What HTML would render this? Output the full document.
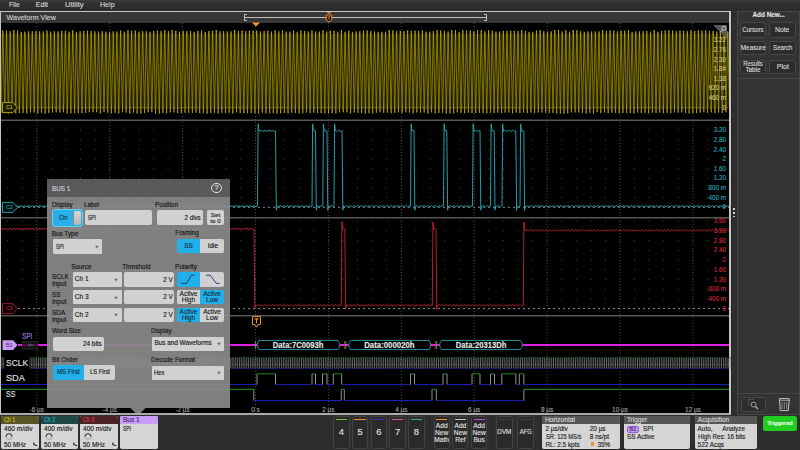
<!DOCTYPE html><html><head><meta charset="utf-8"><style>*{box-sizing:border-box;margin:0;padding:0}
html,body{width:800px;height:450px;overflow:hidden;background:#2e2e2e;font-family:"Liberation Sans",sans-serif;position:relative}
.a{position:absolute}
.t{position:absolute;white-space:nowrap;line-height:1;font-family:"Liberation Sans",sans-serif;-webkit-text-stroke:0.12px currentColor}
</style></head><body>
<div class="a" style="left:0px;top:0px;width:800px;height:11px;background:linear-gradient(#3c3c3c 0px,#303030 3px,#2c2c2c 10px);"></div>
<span class="t" style="left:8.50px;top:2.00px;font-size:7.1px;color:#d8d8d8;transform:scaleX(0.935);transform-origin:left top;">File</span>
<span class="t" style="left:35.80px;top:2.00px;font-size:7.1px;color:#d8d8d8;">Edit</span>
<span class="t" style="left:64.70px;top:2.00px;font-size:7.1px;color:#d8d8d8;transform:scaleX(1.072);transform-origin:left top;">Utility</span>
<span class="t" style="left:100.00px;top:2.00px;font-size:7.1px;color:#d8d8d8;">Help</span>
<div class="a" style="left:0px;top:11px;width:731px;height:404px;background:#000;border:1px solid #c4c4c4;border-right-width:2px;border-bottom:2px solid #ababab;"></div>
<div class="a" style="left:1px;top:12px;width:728px;height:11px;background:#373737;"></div>
<span class="t" style="left:6.50px;top:15.00px;font-size:7.1px;color:#cfcfcf;">Waveform View</span>
<div class="a" style="left:244px;top:13.6px;width:2.8px;height:7.2px;background:transparent;border:1px solid #bdbdbd;border-right:none;"></div>
<div class="a" style="left:244px;top:17.1px;width:243px;height:1px;background:#bdbdbd;"></div>
<div class="a" style="left:484.2px;top:13.6px;width:2.8px;height:7.2px;background:transparent;border:1px solid #bdbdbd;border-left:none;"></div>
<svg class="a" style="left:0;top:0" width="800" height="450" viewBox="0 0 800 450"><line x1="1" y1="120.3" x2="729" y2="120.3" stroke="#555" stroke-width="1.4"/><line x1="1" y1="217.8" x2="729" y2="217.8" stroke="#555" stroke-width="1.4"/><line x1="1" y1="315.7" x2="729" y2="315.7" stroke="#555" stroke-width="1.4"/><line x1="36.80" y1="23" x2="36.80" y2="413" stroke="#464646" stroke-width="1" stroke-dasharray="1 2"/><line x1="109.70" y1="23" x2="109.70" y2="413" stroke="#464646" stroke-width="1" stroke-dasharray="1 2"/><line x1="182.60" y1="23" x2="182.60" y2="413" stroke="#464646" stroke-width="1" stroke-dasharray="1 2"/><line x1="255.50" y1="23" x2="255.50" y2="413" stroke="#464646" stroke-width="1" stroke-dasharray="1 2"/><line x1="328.40" y1="23" x2="328.40" y2="413" stroke="#464646" stroke-width="1" stroke-dasharray="1 2"/><line x1="401.30" y1="23" x2="401.30" y2="413" stroke="#464646" stroke-width="1" stroke-dasharray="1 2"/><line x1="474.20" y1="23" x2="474.20" y2="413" stroke="#464646" stroke-width="1" stroke-dasharray="1 2"/><line x1="547.10" y1="23" x2="547.10" y2="413" stroke="#464646" stroke-width="1" stroke-dasharray="1 2"/><line x1="620.00" y1="23" x2="620.00" y2="413" stroke="#464646" stroke-width="1" stroke-dasharray="1 2"/><line x1="692.90" y1="23" x2="692.90" y2="413" stroke="#464646" stroke-width="1" stroke-dasharray="1 2"/><rect x="7.14" y="97.4" width="1" height="1" fill="#464646"/><rect x="21.72" y="97.4" width="1" height="1" fill="#464646"/><rect x="36.30" y="97.4" width="1" height="1" fill="#464646"/><rect x="50.88" y="97.4" width="1" height="1" fill="#464646"/><rect x="65.46" y="97.4" width="1" height="1" fill="#464646"/><rect x="80.04" y="97.4" width="1" height="1" fill="#464646"/><rect x="94.62" y="97.4" width="1" height="1" fill="#464646"/><rect x="109.20" y="97.4" width="1" height="1" fill="#464646"/><rect x="123.78" y="97.4" width="1" height="1" fill="#464646"/><rect x="138.36" y="97.4" width="1" height="1" fill="#464646"/><rect x="152.94" y="97.4" width="1" height="1" fill="#464646"/><rect x="167.52" y="97.4" width="1" height="1" fill="#464646"/><rect x="182.10" y="97.4" width="1" height="1" fill="#464646"/><rect x="196.68" y="97.4" width="1" height="1" fill="#464646"/><rect x="211.26" y="97.4" width="1" height="1" fill="#464646"/><rect x="225.84" y="97.4" width="1" height="1" fill="#464646"/><rect x="240.42" y="97.4" width="1" height="1" fill="#464646"/><rect x="255.00" y="97.4" width="1" height="1" fill="#464646"/><rect x="269.58" y="97.4" width="1" height="1" fill="#464646"/><rect x="284.16" y="97.4" width="1" height="1" fill="#464646"/><rect x="298.74" y="97.4" width="1" height="1" fill="#464646"/><rect x="313.32" y="97.4" width="1" height="1" fill="#464646"/><rect x="327.90" y="97.4" width="1" height="1" fill="#464646"/><rect x="342.48" y="97.4" width="1" height="1" fill="#464646"/><rect x="357.06" y="97.4" width="1" height="1" fill="#464646"/><rect x="371.64" y="97.4" width="1" height="1" fill="#464646"/><rect x="386.22" y="97.4" width="1" height="1" fill="#464646"/><rect x="400.80" y="97.4" width="1" height="1" fill="#464646"/><rect x="415.38" y="97.4" width="1" height="1" fill="#464646"/><rect x="429.96" y="97.4" width="1" height="1" fill="#464646"/><rect x="444.54" y="97.4" width="1" height="1" fill="#464646"/><rect x="459.12" y="97.4" width="1" height="1" fill="#464646"/><rect x="473.70" y="97.4" width="1" height="1" fill="#464646"/><rect x="488.28" y="97.4" width="1" height="1" fill="#464646"/><rect x="502.86" y="97.4" width="1" height="1" fill="#464646"/><rect x="517.44" y="97.4" width="1" height="1" fill="#464646"/><rect x="532.02" y="97.4" width="1" height="1" fill="#464646"/><rect x="546.60" y="97.4" width="1" height="1" fill="#464646"/><rect x="561.18" y="97.4" width="1" height="1" fill="#464646"/><rect x="575.76" y="97.4" width="1" height="1" fill="#464646"/><rect x="590.34" y="97.4" width="1" height="1" fill="#464646"/><rect x="604.92" y="97.4" width="1" height="1" fill="#464646"/><rect x="619.50" y="97.4" width="1" height="1" fill="#464646"/><rect x="634.08" y="97.4" width="1" height="1" fill="#464646"/><rect x="648.66" y="97.4" width="1" height="1" fill="#464646"/><rect x="663.24" y="97.4" width="1" height="1" fill="#464646"/><rect x="677.82" y="97.4" width="1" height="1" fill="#464646"/><rect x="692.40" y="97.4" width="1" height="1" fill="#464646"/><rect x="706.98" y="97.4" width="1" height="1" fill="#464646"/><rect x="721.56" y="97.4" width="1" height="1" fill="#464646"/><rect x="7.14" y="87.8" width="1" height="1" fill="#464646"/><rect x="21.72" y="87.8" width="1" height="1" fill="#464646"/><rect x="36.30" y="87.8" width="1" height="1" fill="#464646"/><rect x="50.88" y="87.8" width="1" height="1" fill="#464646"/><rect x="65.46" y="87.8" width="1" height="1" fill="#464646"/><rect x="80.04" y="87.8" width="1" height="1" fill="#464646"/><rect x="94.62" y="87.8" width="1" height="1" fill="#464646"/><rect x="109.20" y="87.8" width="1" height="1" fill="#464646"/><rect x="123.78" y="87.8" width="1" height="1" fill="#464646"/><rect x="138.36" y="87.8" width="1" height="1" fill="#464646"/><rect x="152.94" y="87.8" width="1" height="1" fill="#464646"/><rect x="167.52" y="87.8" width="1" height="1" fill="#464646"/><rect x="182.10" y="87.8" width="1" height="1" fill="#464646"/><rect x="196.68" y="87.8" width="1" height="1" fill="#464646"/><rect x="211.26" y="87.8" width="1" height="1" fill="#464646"/><rect x="225.84" y="87.8" width="1" height="1" fill="#464646"/><rect x="240.42" y="87.8" width="1" height="1" fill="#464646"/><rect x="255.00" y="87.8" width="1" height="1" fill="#464646"/><rect x="269.58" y="87.8" width="1" height="1" fill="#464646"/><rect x="284.16" y="87.8" width="1" height="1" fill="#464646"/><rect x="298.74" y="87.8" width="1" height="1" fill="#464646"/><rect x="313.32" y="87.8" width="1" height="1" fill="#464646"/><rect x="327.90" y="87.8" width="1" height="1" fill="#464646"/><rect x="342.48" y="87.8" width="1" height="1" fill="#464646"/><rect x="357.06" y="87.8" width="1" height="1" fill="#464646"/><rect x="371.64" y="87.8" width="1" height="1" fill="#464646"/><rect x="386.22" y="87.8" width="1" height="1" fill="#464646"/><rect x="400.80" y="87.8" width="1" height="1" fill="#464646"/><rect x="415.38" y="87.8" width="1" height="1" fill="#464646"/><rect x="429.96" y="87.8" width="1" height="1" fill="#464646"/><rect x="444.54" y="87.8" width="1" height="1" fill="#464646"/><rect x="459.12" y="87.8" width="1" height="1" fill="#464646"/><rect x="473.70" y="87.8" width="1" height="1" fill="#464646"/><rect x="488.28" y="87.8" width="1" height="1" fill="#464646"/><rect x="502.86" y="87.8" width="1" height="1" fill="#464646"/><rect x="517.44" y="87.8" width="1" height="1" fill="#464646"/><rect x="532.02" y="87.8" width="1" height="1" fill="#464646"/><rect x="546.60" y="87.8" width="1" height="1" fill="#464646"/><rect x="561.18" y="87.8" width="1" height="1" fill="#464646"/><rect x="575.76" y="87.8" width="1" height="1" fill="#464646"/><rect x="590.34" y="87.8" width="1" height="1" fill="#464646"/><rect x="604.92" y="87.8" width="1" height="1" fill="#464646"/><rect x="619.50" y="87.8" width="1" height="1" fill="#464646"/><rect x="634.08" y="87.8" width="1" height="1" fill="#464646"/><rect x="648.66" y="87.8" width="1" height="1" fill="#464646"/><rect x="663.24" y="87.8" width="1" height="1" fill="#464646"/><rect x="677.82" y="87.8" width="1" height="1" fill="#464646"/><rect x="692.40" y="87.8" width="1" height="1" fill="#464646"/><rect x="706.98" y="87.8" width="1" height="1" fill="#464646"/><rect x="721.56" y="87.8" width="1" height="1" fill="#464646"/><rect x="7.14" y="78.2" width="1" height="1" fill="#464646"/><rect x="21.72" y="78.2" width="1" height="1" fill="#464646"/><rect x="36.30" y="78.2" width="1" height="1" fill="#464646"/><rect x="50.88" y="78.2" width="1" height="1" fill="#464646"/><rect x="65.46" y="78.2" width="1" height="1" fill="#464646"/><rect x="80.04" y="78.2" width="1" height="1" fill="#464646"/><rect x="94.62" y="78.2" width="1" height="1" fill="#464646"/><rect x="109.20" y="78.2" width="1" height="1" fill="#464646"/><rect x="123.78" y="78.2" width="1" height="1" fill="#464646"/><rect x="138.36" y="78.2" width="1" height="1" fill="#464646"/><rect x="152.94" y="78.2" width="1" height="1" fill="#464646"/><rect x="167.52" y="78.2" width="1" height="1" fill="#464646"/><rect x="182.10" y="78.2" width="1" height="1" fill="#464646"/><rect x="196.68" y="78.2" width="1" height="1" fill="#464646"/><rect x="211.26" y="78.2" width="1" height="1" fill="#464646"/><rect x="225.84" y="78.2" width="1" height="1" fill="#464646"/><rect x="240.42" y="78.2" width="1" height="1" fill="#464646"/><rect x="255.00" y="78.2" width="1" height="1" fill="#464646"/><rect x="269.58" y="78.2" width="1" height="1" fill="#464646"/><rect x="284.16" y="78.2" width="1" height="1" fill="#464646"/><rect x="298.74" y="78.2" width="1" height="1" fill="#464646"/><rect x="313.32" y="78.2" width="1" height="1" fill="#464646"/><rect x="327.90" y="78.2" width="1" height="1" fill="#464646"/><rect x="342.48" y="78.2" width="1" height="1" fill="#464646"/><rect x="357.06" y="78.2" width="1" height="1" fill="#464646"/><rect x="371.64" y="78.2" width="1" height="1" fill="#464646"/><rect x="386.22" y="78.2" width="1" height="1" fill="#464646"/><rect x="400.80" y="78.2" width="1" height="1" fill="#464646"/><rect x="415.38" y="78.2" width="1" height="1" fill="#464646"/><rect x="429.96" y="78.2" width="1" height="1" fill="#464646"/><rect x="444.54" y="78.2" width="1" height="1" fill="#464646"/><rect x="459.12" y="78.2" width="1" height="1" fill="#464646"/><rect x="473.70" y="78.2" width="1" height="1" fill="#464646"/><rect x="488.28" y="78.2" width="1" height="1" fill="#464646"/><rect x="502.86" y="78.2" width="1" height="1" fill="#464646"/><rect x="517.44" y="78.2" width="1" height="1" fill="#464646"/><rect x="532.02" y="78.2" width="1" height="1" fill="#464646"/><rect x="546.60" y="78.2" width="1" height="1" fill="#464646"/><rect x="561.18" y="78.2" width="1" height="1" fill="#464646"/><rect x="575.76" y="78.2" width="1" height="1" fill="#464646"/><rect x="590.34" y="78.2" width="1" height="1" fill="#464646"/><rect x="604.92" y="78.2" width="1" height="1" fill="#464646"/><rect x="619.50" y="78.2" width="1" height="1" fill="#464646"/><rect x="634.08" y="78.2" width="1" height="1" fill="#464646"/><rect x="648.66" y="78.2" width="1" height="1" fill="#464646"/><rect x="663.24" y="78.2" width="1" height="1" fill="#464646"/><rect x="677.82" y="78.2" width="1" height="1" fill="#464646"/><rect x="692.40" y="78.2" width="1" height="1" fill="#464646"/><rect x="706.98" y="78.2" width="1" height="1" fill="#464646"/><rect x="721.56" y="78.2" width="1" height="1" fill="#464646"/><rect x="7.14" y="68.6" width="1" height="1" fill="#464646"/><rect x="21.72" y="68.6" width="1" height="1" fill="#464646"/><rect x="36.30" y="68.6" width="1" height="1" fill="#464646"/><rect x="50.88" y="68.6" width="1" height="1" fill="#464646"/><rect x="65.46" y="68.6" width="1" height="1" fill="#464646"/><rect x="80.04" y="68.6" width="1" height="1" fill="#464646"/><rect x="94.62" y="68.6" width="1" height="1" fill="#464646"/><rect x="109.20" y="68.6" width="1" height="1" fill="#464646"/><rect x="123.78" y="68.6" width="1" height="1" fill="#464646"/><rect x="138.36" y="68.6" width="1" height="1" fill="#464646"/><rect x="152.94" y="68.6" width="1" height="1" fill="#464646"/><rect x="167.52" y="68.6" width="1" height="1" fill="#464646"/><rect x="182.10" y="68.6" width="1" height="1" fill="#464646"/><rect x="196.68" y="68.6" width="1" height="1" fill="#464646"/><rect x="211.26" y="68.6" width="1" height="1" fill="#464646"/><rect x="225.84" y="68.6" width="1" height="1" fill="#464646"/><rect x="240.42" y="68.6" width="1" height="1" fill="#464646"/><rect x="255.00" y="68.6" width="1" height="1" fill="#464646"/><rect x="269.58" y="68.6" width="1" height="1" fill="#464646"/><rect x="284.16" y="68.6" width="1" height="1" fill="#464646"/><rect x="298.74" y="68.6" width="1" height="1" fill="#464646"/><rect x="313.32" y="68.6" width="1" height="1" fill="#464646"/><rect x="327.90" y="68.6" width="1" height="1" fill="#464646"/><rect x="342.48" y="68.6" width="1" height="1" fill="#464646"/><rect x="357.06" y="68.6" width="1" height="1" fill="#464646"/><rect x="371.64" y="68.6" width="1" height="1" fill="#464646"/><rect x="386.22" y="68.6" width="1" height="1" fill="#464646"/><rect x="400.80" y="68.6" width="1" height="1" fill="#464646"/><rect x="415.38" y="68.6" width="1" height="1" fill="#464646"/><rect x="429.96" y="68.6" width="1" height="1" fill="#464646"/><rect x="444.54" y="68.6" width="1" height="1" fill="#464646"/><rect x="459.12" y="68.6" width="1" height="1" fill="#464646"/><rect x="473.70" y="68.6" width="1" height="1" fill="#464646"/><rect x="488.28" y="68.6" width="1" height="1" fill="#464646"/><rect x="502.86" y="68.6" width="1" height="1" fill="#464646"/><rect x="517.44" y="68.6" width="1" height="1" fill="#464646"/><rect x="532.02" y="68.6" width="1" height="1" fill="#464646"/><rect x="546.60" y="68.6" width="1" height="1" fill="#464646"/><rect x="561.18" y="68.6" width="1" height="1" fill="#464646"/><rect x="575.76" y="68.6" width="1" height="1" fill="#464646"/><rect x="590.34" y="68.6" width="1" height="1" fill="#464646"/><rect x="604.92" y="68.6" width="1" height="1" fill="#464646"/><rect x="619.50" y="68.6" width="1" height="1" fill="#464646"/><rect x="634.08" y="68.6" width="1" height="1" fill="#464646"/><rect x="648.66" y="68.6" width="1" height="1" fill="#464646"/><rect x="663.24" y="68.6" width="1" height="1" fill="#464646"/><rect x="677.82" y="68.6" width="1" height="1" fill="#464646"/><rect x="692.40" y="68.6" width="1" height="1" fill="#464646"/><rect x="706.98" y="68.6" width="1" height="1" fill="#464646"/><rect x="721.56" y="68.6" width="1" height="1" fill="#464646"/><rect x="7.14" y="59.0" width="1" height="1" fill="#464646"/><rect x="21.72" y="59.0" width="1" height="1" fill="#464646"/><rect x="36.30" y="59.0" width="1" height="1" fill="#464646"/><rect x="50.88" y="59.0" width="1" height="1" fill="#464646"/><rect x="65.46" y="59.0" width="1" height="1" fill="#464646"/><rect x="80.04" y="59.0" width="1" height="1" fill="#464646"/><rect x="94.62" y="59.0" width="1" height="1" fill="#464646"/><rect x="109.20" y="59.0" width="1" height="1" fill="#464646"/><rect x="123.78" y="59.0" width="1" height="1" fill="#464646"/><rect x="138.36" y="59.0" width="1" height="1" fill="#464646"/><rect x="152.94" y="59.0" width="1" height="1" fill="#464646"/><rect x="167.52" y="59.0" width="1" height="1" fill="#464646"/><rect x="182.10" y="59.0" width="1" height="1" fill="#464646"/><rect x="196.68" y="59.0" width="1" height="1" fill="#464646"/><rect x="211.26" y="59.0" width="1" height="1" fill="#464646"/><rect x="225.84" y="59.0" width="1" height="1" fill="#464646"/><rect x="240.42" y="59.0" width="1" height="1" fill="#464646"/><rect x="255.00" y="59.0" width="1" height="1" fill="#464646"/><rect x="269.58" y="59.0" width="1" height="1" fill="#464646"/><rect x="284.16" y="59.0" width="1" height="1" fill="#464646"/><rect x="298.74" y="59.0" width="1" height="1" fill="#464646"/><rect x="313.32" y="59.0" width="1" height="1" fill="#464646"/><rect x="327.90" y="59.0" width="1" height="1" fill="#464646"/><rect x="342.48" y="59.0" width="1" height="1" fill="#464646"/><rect x="357.06" y="59.0" width="1" height="1" fill="#464646"/><rect x="371.64" y="59.0" width="1" height="1" fill="#464646"/><rect x="386.22" y="59.0" width="1" height="1" fill="#464646"/><rect x="400.80" y="59.0" width="1" height="1" fill="#464646"/><rect x="415.38" y="59.0" width="1" height="1" fill="#464646"/><rect x="429.96" y="59.0" width="1" height="1" fill="#464646"/><rect x="444.54" y="59.0" width="1" height="1" fill="#464646"/><rect x="459.12" y="59.0" width="1" height="1" fill="#464646"/><rect x="473.70" y="59.0" width="1" height="1" fill="#464646"/><rect x="488.28" y="59.0" width="1" height="1" fill="#464646"/><rect x="502.86" y="59.0" width="1" height="1" fill="#464646"/><rect x="517.44" y="59.0" width="1" height="1" fill="#464646"/><rect x="532.02" y="59.0" width="1" height="1" fill="#464646"/><rect x="546.60" y="59.0" width="1" height="1" fill="#464646"/><rect x="561.18" y="59.0" width="1" height="1" fill="#464646"/><rect x="575.76" y="59.0" width="1" height="1" fill="#464646"/><rect x="590.34" y="59.0" width="1" height="1" fill="#464646"/><rect x="604.92" y="59.0" width="1" height="1" fill="#464646"/><rect x="619.50" y="59.0" width="1" height="1" fill="#464646"/><rect x="634.08" y="59.0" width="1" height="1" fill="#464646"/><rect x="648.66" y="59.0" width="1" height="1" fill="#464646"/><rect x="663.24" y="59.0" width="1" height="1" fill="#464646"/><rect x="677.82" y="59.0" width="1" height="1" fill="#464646"/><rect x="692.40" y="59.0" width="1" height="1" fill="#464646"/><rect x="706.98" y="59.0" width="1" height="1" fill="#464646"/><rect x="721.56" y="59.0" width="1" height="1" fill="#464646"/><rect x="7.14" y="49.4" width="1" height="1" fill="#464646"/><rect x="21.72" y="49.4" width="1" height="1" fill="#464646"/><rect x="36.30" y="49.4" width="1" height="1" fill="#464646"/><rect x="50.88" y="49.4" width="1" height="1" fill="#464646"/><rect x="65.46" y="49.4" width="1" height="1" fill="#464646"/><rect x="80.04" y="49.4" width="1" height="1" fill="#464646"/><rect x="94.62" y="49.4" width="1" height="1" fill="#464646"/><rect x="109.20" y="49.4" width="1" height="1" fill="#464646"/><rect x="123.78" y="49.4" width="1" height="1" fill="#464646"/><rect x="138.36" y="49.4" width="1" height="1" fill="#464646"/><rect x="152.94" y="49.4" width="1" height="1" fill="#464646"/><rect x="167.52" y="49.4" width="1" height="1" fill="#464646"/><rect x="182.10" y="49.4" width="1" height="1" fill="#464646"/><rect x="196.68" y="49.4" width="1" height="1" fill="#464646"/><rect x="211.26" y="49.4" width="1" height="1" fill="#464646"/><rect x="225.84" y="49.4" width="1" height="1" fill="#464646"/><rect x="240.42" y="49.4" width="1" height="1" fill="#464646"/><rect x="255.00" y="49.4" width="1" height="1" fill="#464646"/><rect x="269.58" y="49.4" width="1" height="1" fill="#464646"/><rect x="284.16" y="49.4" width="1" height="1" fill="#464646"/><rect x="298.74" y="49.4" width="1" height="1" fill="#464646"/><rect x="313.32" y="49.4" width="1" height="1" fill="#464646"/><rect x="327.90" y="49.4" width="1" height="1" fill="#464646"/><rect x="342.48" y="49.4" width="1" height="1" fill="#464646"/><rect x="357.06" y="49.4" width="1" height="1" fill="#464646"/><rect x="371.64" y="49.4" width="1" height="1" fill="#464646"/><rect x="386.22" y="49.4" width="1" height="1" fill="#464646"/><rect x="400.80" y="49.4" width="1" height="1" fill="#464646"/><rect x="415.38" y="49.4" width="1" height="1" fill="#464646"/><rect x="429.96" y="49.4" width="1" height="1" fill="#464646"/><rect x="444.54" y="49.4" width="1" height="1" fill="#464646"/><rect x="459.12" y="49.4" width="1" height="1" fill="#464646"/><rect x="473.70" y="49.4" width="1" height="1" fill="#464646"/><rect x="488.28" y="49.4" width="1" height="1" fill="#464646"/><rect x="502.86" y="49.4" width="1" height="1" fill="#464646"/><rect x="517.44" y="49.4" width="1" height="1" fill="#464646"/><rect x="532.02" y="49.4" width="1" height="1" fill="#464646"/><rect x="546.60" y="49.4" width="1" height="1" fill="#464646"/><rect x="561.18" y="49.4" width="1" height="1" fill="#464646"/><rect x="575.76" y="49.4" width="1" height="1" fill="#464646"/><rect x="590.34" y="49.4" width="1" height="1" fill="#464646"/><rect x="604.92" y="49.4" width="1" height="1" fill="#464646"/><rect x="619.50" y="49.4" width="1" height="1" fill="#464646"/><rect x="634.08" y="49.4" width="1" height="1" fill="#464646"/><rect x="648.66" y="49.4" width="1" height="1" fill="#464646"/><rect x="663.24" y="49.4" width="1" height="1" fill="#464646"/><rect x="677.82" y="49.4" width="1" height="1" fill="#464646"/><rect x="692.40" y="49.4" width="1" height="1" fill="#464646"/><rect x="706.98" y="49.4" width="1" height="1" fill="#464646"/><rect x="721.56" y="49.4" width="1" height="1" fill="#464646"/><rect x="7.14" y="39.8" width="1" height="1" fill="#464646"/><rect x="21.72" y="39.8" width="1" height="1" fill="#464646"/><rect x="36.30" y="39.8" width="1" height="1" fill="#464646"/><rect x="50.88" y="39.8" width="1" height="1" fill="#464646"/><rect x="65.46" y="39.8" width="1" height="1" fill="#464646"/><rect x="80.04" y="39.8" width="1" height="1" fill="#464646"/><rect x="94.62" y="39.8" width="1" height="1" fill="#464646"/><rect x="109.20" y="39.8" width="1" height="1" fill="#464646"/><rect x="123.78" y="39.8" width="1" height="1" fill="#464646"/><rect x="138.36" y="39.8" width="1" height="1" fill="#464646"/><rect x="152.94" y="39.8" width="1" height="1" fill="#464646"/><rect x="167.52" y="39.8" width="1" height="1" fill="#464646"/><rect x="182.10" y="39.8" width="1" height="1" fill="#464646"/><rect x="196.68" y="39.8" width="1" height="1" fill="#464646"/><rect x="211.26" y="39.8" width="1" height="1" fill="#464646"/><rect x="225.84" y="39.8" width="1" height="1" fill="#464646"/><rect x="240.42" y="39.8" width="1" height="1" fill="#464646"/><rect x="255.00" y="39.8" width="1" height="1" fill="#464646"/><rect x="269.58" y="39.8" width="1" height="1" fill="#464646"/><rect x="284.16" y="39.8" width="1" height="1" fill="#464646"/><rect x="298.74" y="39.8" width="1" height="1" fill="#464646"/><rect x="313.32" y="39.8" width="1" height="1" fill="#464646"/><rect x="327.90" y="39.8" width="1" height="1" fill="#464646"/><rect x="342.48" y="39.8" width="1" height="1" fill="#464646"/><rect x="357.06" y="39.8" width="1" height="1" fill="#464646"/><rect x="371.64" y="39.8" width="1" height="1" fill="#464646"/><rect x="386.22" y="39.8" width="1" height="1" fill="#464646"/><rect x="400.80" y="39.8" width="1" height="1" fill="#464646"/><rect x="415.38" y="39.8" width="1" height="1" fill="#464646"/><rect x="429.96" y="39.8" width="1" height="1" fill="#464646"/><rect x="444.54" y="39.8" width="1" height="1" fill="#464646"/><rect x="459.12" y="39.8" width="1" height="1" fill="#464646"/><rect x="473.70" y="39.8" width="1" height="1" fill="#464646"/><rect x="488.28" y="39.8" width="1" height="1" fill="#464646"/><rect x="502.86" y="39.8" width="1" height="1" fill="#464646"/><rect x="517.44" y="39.8" width="1" height="1" fill="#464646"/><rect x="532.02" y="39.8" width="1" height="1" fill="#464646"/><rect x="546.60" y="39.8" width="1" height="1" fill="#464646"/><rect x="561.18" y="39.8" width="1" height="1" fill="#464646"/><rect x="575.76" y="39.8" width="1" height="1" fill="#464646"/><rect x="590.34" y="39.8" width="1" height="1" fill="#464646"/><rect x="604.92" y="39.8" width="1" height="1" fill="#464646"/><rect x="619.50" y="39.8" width="1" height="1" fill="#464646"/><rect x="634.08" y="39.8" width="1" height="1" fill="#464646"/><rect x="648.66" y="39.8" width="1" height="1" fill="#464646"/><rect x="663.24" y="39.8" width="1" height="1" fill="#464646"/><rect x="677.82" y="39.8" width="1" height="1" fill="#464646"/><rect x="692.40" y="39.8" width="1" height="1" fill="#464646"/><rect x="706.98" y="39.8" width="1" height="1" fill="#464646"/><rect x="721.56" y="39.8" width="1" height="1" fill="#464646"/><rect x="7.14" y="197.2" width="1" height="1" fill="#464646"/><rect x="21.72" y="197.2" width="1" height="1" fill="#464646"/><rect x="36.30" y="197.2" width="1" height="1" fill="#464646"/><rect x="50.88" y="197.2" width="1" height="1" fill="#464646"/><rect x="65.46" y="197.2" width="1" height="1" fill="#464646"/><rect x="80.04" y="197.2" width="1" height="1" fill="#464646"/><rect x="94.62" y="197.2" width="1" height="1" fill="#464646"/><rect x="109.20" y="197.2" width="1" height="1" fill="#464646"/><rect x="123.78" y="197.2" width="1" height="1" fill="#464646"/><rect x="138.36" y="197.2" width="1" height="1" fill="#464646"/><rect x="152.94" y="197.2" width="1" height="1" fill="#464646"/><rect x="167.52" y="197.2" width="1" height="1" fill="#464646"/><rect x="182.10" y="197.2" width="1" height="1" fill="#464646"/><rect x="196.68" y="197.2" width="1" height="1" fill="#464646"/><rect x="211.26" y="197.2" width="1" height="1" fill="#464646"/><rect x="225.84" y="197.2" width="1" height="1" fill="#464646"/><rect x="240.42" y="197.2" width="1" height="1" fill="#464646"/><rect x="255.00" y="197.2" width="1" height="1" fill="#464646"/><rect x="269.58" y="197.2" width="1" height="1" fill="#464646"/><rect x="284.16" y="197.2" width="1" height="1" fill="#464646"/><rect x="298.74" y="197.2" width="1" height="1" fill="#464646"/><rect x="313.32" y="197.2" width="1" height="1" fill="#464646"/><rect x="327.90" y="197.2" width="1" height="1" fill="#464646"/><rect x="342.48" y="197.2" width="1" height="1" fill="#464646"/><rect x="357.06" y="197.2" width="1" height="1" fill="#464646"/><rect x="371.64" y="197.2" width="1" height="1" fill="#464646"/><rect x="386.22" y="197.2" width="1" height="1" fill="#464646"/><rect x="400.80" y="197.2" width="1" height="1" fill="#464646"/><rect x="415.38" y="197.2" width="1" height="1" fill="#464646"/><rect x="429.96" y="197.2" width="1" height="1" fill="#464646"/><rect x="444.54" y="197.2" width="1" height="1" fill="#464646"/><rect x="459.12" y="197.2" width="1" height="1" fill="#464646"/><rect x="473.70" y="197.2" width="1" height="1" fill="#464646"/><rect x="488.28" y="197.2" width="1" height="1" fill="#464646"/><rect x="502.86" y="197.2" width="1" height="1" fill="#464646"/><rect x="517.44" y="197.2" width="1" height="1" fill="#464646"/><rect x="532.02" y="197.2" width="1" height="1" fill="#464646"/><rect x="546.60" y="197.2" width="1" height="1" fill="#464646"/><rect x="561.18" y="197.2" width="1" height="1" fill="#464646"/><rect x="575.76" y="197.2" width="1" height="1" fill="#464646"/><rect x="590.34" y="197.2" width="1" height="1" fill="#464646"/><rect x="604.92" y="197.2" width="1" height="1" fill="#464646"/><rect x="619.50" y="197.2" width="1" height="1" fill="#464646"/><rect x="634.08" y="197.2" width="1" height="1" fill="#464646"/><rect x="648.66" y="197.2" width="1" height="1" fill="#464646"/><rect x="663.24" y="197.2" width="1" height="1" fill="#464646"/><rect x="677.82" y="197.2" width="1" height="1" fill="#464646"/><rect x="692.40" y="197.2" width="1" height="1" fill="#464646"/><rect x="706.98" y="197.2" width="1" height="1" fill="#464646"/><rect x="721.56" y="197.2" width="1" height="1" fill="#464646"/><rect x="7.14" y="187.5" width="1" height="1" fill="#464646"/><rect x="21.72" y="187.5" width="1" height="1" fill="#464646"/><rect x="36.30" y="187.5" width="1" height="1" fill="#464646"/><rect x="50.88" y="187.5" width="1" height="1" fill="#464646"/><rect x="65.46" y="187.5" width="1" height="1" fill="#464646"/><rect x="80.04" y="187.5" width="1" height="1" fill="#464646"/><rect x="94.62" y="187.5" width="1" height="1" fill="#464646"/><rect x="109.20" y="187.5" width="1" height="1" fill="#464646"/><rect x="123.78" y="187.5" width="1" height="1" fill="#464646"/><rect x="138.36" y="187.5" width="1" height="1" fill="#464646"/><rect x="152.94" y="187.5" width="1" height="1" fill="#464646"/><rect x="167.52" y="187.5" width="1" height="1" fill="#464646"/><rect x="182.10" y="187.5" width="1" height="1" fill="#464646"/><rect x="196.68" y="187.5" width="1" height="1" fill="#464646"/><rect x="211.26" y="187.5" width="1" height="1" fill="#464646"/><rect x="225.84" y="187.5" width="1" height="1" fill="#464646"/><rect x="240.42" y="187.5" width="1" height="1" fill="#464646"/><rect x="255.00" y="187.5" width="1" height="1" fill="#464646"/><rect x="269.58" y="187.5" width="1" height="1" fill="#464646"/><rect x="284.16" y="187.5" width="1" height="1" fill="#464646"/><rect x="298.74" y="187.5" width="1" height="1" fill="#464646"/><rect x="313.32" y="187.5" width="1" height="1" fill="#464646"/><rect x="327.90" y="187.5" width="1" height="1" fill="#464646"/><rect x="342.48" y="187.5" width="1" height="1" fill="#464646"/><rect x="357.06" y="187.5" width="1" height="1" fill="#464646"/><rect x="371.64" y="187.5" width="1" height="1" fill="#464646"/><rect x="386.22" y="187.5" width="1" height="1" fill="#464646"/><rect x="400.80" y="187.5" width="1" height="1" fill="#464646"/><rect x="415.38" y="187.5" width="1" height="1" fill="#464646"/><rect x="429.96" y="187.5" width="1" height="1" fill="#464646"/><rect x="444.54" y="187.5" width="1" height="1" fill="#464646"/><rect x="459.12" y="187.5" width="1" height="1" fill="#464646"/><rect x="473.70" y="187.5" width="1" height="1" fill="#464646"/><rect x="488.28" y="187.5" width="1" height="1" fill="#464646"/><rect x="502.86" y="187.5" width="1" height="1" fill="#464646"/><rect x="517.44" y="187.5" width="1" height="1" fill="#464646"/><rect x="532.02" y="187.5" width="1" height="1" fill="#464646"/><rect x="546.60" y="187.5" width="1" height="1" fill="#464646"/><rect x="561.18" y="187.5" width="1" height="1" fill="#464646"/><rect x="575.76" y="187.5" width="1" height="1" fill="#464646"/><rect x="590.34" y="187.5" width="1" height="1" fill="#464646"/><rect x="604.92" y="187.5" width="1" height="1" fill="#464646"/><rect x="619.50" y="187.5" width="1" height="1" fill="#464646"/><rect x="634.08" y="187.5" width="1" height="1" fill="#464646"/><rect x="648.66" y="187.5" width="1" height="1" fill="#464646"/><rect x="663.24" y="187.5" width="1" height="1" fill="#464646"/><rect x="677.82" y="187.5" width="1" height="1" fill="#464646"/><rect x="692.40" y="187.5" width="1" height="1" fill="#464646"/><rect x="706.98" y="187.5" width="1" height="1" fill="#464646"/><rect x="721.56" y="187.5" width="1" height="1" fill="#464646"/><rect x="7.14" y="177.9" width="1" height="1" fill="#464646"/><rect x="21.72" y="177.9" width="1" height="1" fill="#464646"/><rect x="36.30" y="177.9" width="1" height="1" fill="#464646"/><rect x="50.88" y="177.9" width="1" height="1" fill="#464646"/><rect x="65.46" y="177.9" width="1" height="1" fill="#464646"/><rect x="80.04" y="177.9" width="1" height="1" fill="#464646"/><rect x="94.62" y="177.9" width="1" height="1" fill="#464646"/><rect x="109.20" y="177.9" width="1" height="1" fill="#464646"/><rect x="123.78" y="177.9" width="1" height="1" fill="#464646"/><rect x="138.36" y="177.9" width="1" height="1" fill="#464646"/><rect x="152.94" y="177.9" width="1" height="1" fill="#464646"/><rect x="167.52" y="177.9" width="1" height="1" fill="#464646"/><rect x="182.10" y="177.9" width="1" height="1" fill="#464646"/><rect x="196.68" y="177.9" width="1" height="1" fill="#464646"/><rect x="211.26" y="177.9" width="1" height="1" fill="#464646"/><rect x="225.84" y="177.9" width="1" height="1" fill="#464646"/><rect x="240.42" y="177.9" width="1" height="1" fill="#464646"/><rect x="255.00" y="177.9" width="1" height="1" fill="#464646"/><rect x="269.58" y="177.9" width="1" height="1" fill="#464646"/><rect x="284.16" y="177.9" width="1" height="1" fill="#464646"/><rect x="298.74" y="177.9" width="1" height="1" fill="#464646"/><rect x="313.32" y="177.9" width="1" height="1" fill="#464646"/><rect x="327.90" y="177.9" width="1" height="1" fill="#464646"/><rect x="342.48" y="177.9" width="1" height="1" fill="#464646"/><rect x="357.06" y="177.9" width="1" height="1" fill="#464646"/><rect x="371.64" y="177.9" width="1" height="1" fill="#464646"/><rect x="386.22" y="177.9" width="1" height="1" fill="#464646"/><rect x="400.80" y="177.9" width="1" height="1" fill="#464646"/><rect x="415.38" y="177.9" width="1" height="1" fill="#464646"/><rect x="429.96" y="177.9" width="1" height="1" fill="#464646"/><rect x="444.54" y="177.9" width="1" height="1" fill="#464646"/><rect x="459.12" y="177.9" width="1" height="1" fill="#464646"/><rect x="473.70" y="177.9" width="1" height="1" fill="#464646"/><rect x="488.28" y="177.9" width="1" height="1" fill="#464646"/><rect x="502.86" y="177.9" width="1" height="1" fill="#464646"/><rect x="517.44" y="177.9" width="1" height="1" fill="#464646"/><rect x="532.02" y="177.9" width="1" height="1" fill="#464646"/><rect x="546.60" y="177.9" width="1" height="1" fill="#464646"/><rect x="561.18" y="177.9" width="1" height="1" fill="#464646"/><rect x="575.76" y="177.9" width="1" height="1" fill="#464646"/><rect x="590.34" y="177.9" width="1" height="1" fill="#464646"/><rect x="604.92" y="177.9" width="1" height="1" fill="#464646"/><rect x="619.50" y="177.9" width="1" height="1" fill="#464646"/><rect x="634.08" y="177.9" width="1" height="1" fill="#464646"/><rect x="648.66" y="177.9" width="1" height="1" fill="#464646"/><rect x="663.24" y="177.9" width="1" height="1" fill="#464646"/><rect x="677.82" y="177.9" width="1" height="1" fill="#464646"/><rect x="692.40" y="177.9" width="1" height="1" fill="#464646"/><rect x="706.98" y="177.9" width="1" height="1" fill="#464646"/><rect x="721.56" y="177.9" width="1" height="1" fill="#464646"/><rect x="7.14" y="168.2" width="1" height="1" fill="#464646"/><rect x="21.72" y="168.2" width="1" height="1" fill="#464646"/><rect x="36.30" y="168.2" width="1" height="1" fill="#464646"/><rect x="50.88" y="168.2" width="1" height="1" fill="#464646"/><rect x="65.46" y="168.2" width="1" height="1" fill="#464646"/><rect x="80.04" y="168.2" width="1" height="1" fill="#464646"/><rect x="94.62" y="168.2" width="1" height="1" fill="#464646"/><rect x="109.20" y="168.2" width="1" height="1" fill="#464646"/><rect x="123.78" y="168.2" width="1" height="1" fill="#464646"/><rect x="138.36" y="168.2" width="1" height="1" fill="#464646"/><rect x="152.94" y="168.2" width="1" height="1" fill="#464646"/><rect x="167.52" y="168.2" width="1" height="1" fill="#464646"/><rect x="182.10" y="168.2" width="1" height="1" fill="#464646"/><rect x="196.68" y="168.2" width="1" height="1" fill="#464646"/><rect x="211.26" y="168.2" width="1" height="1" fill="#464646"/><rect x="225.84" y="168.2" width="1" height="1" fill="#464646"/><rect x="240.42" y="168.2" width="1" height="1" fill="#464646"/><rect x="255.00" y="168.2" width="1" height="1" fill="#464646"/><rect x="269.58" y="168.2" width="1" height="1" fill="#464646"/><rect x="284.16" y="168.2" width="1" height="1" fill="#464646"/><rect x="298.74" y="168.2" width="1" height="1" fill="#464646"/><rect x="313.32" y="168.2" width="1" height="1" fill="#464646"/><rect x="327.90" y="168.2" width="1" height="1" fill="#464646"/><rect x="342.48" y="168.2" width="1" height="1" fill="#464646"/><rect x="357.06" y="168.2" width="1" height="1" fill="#464646"/><rect x="371.64" y="168.2" width="1" height="1" fill="#464646"/><rect x="386.22" y="168.2" width="1" height="1" fill="#464646"/><rect x="400.80" y="168.2" width="1" height="1" fill="#464646"/><rect x="415.38" y="168.2" width="1" height="1" fill="#464646"/><rect x="429.96" y="168.2" width="1" height="1" fill="#464646"/><rect x="444.54" y="168.2" width="1" height="1" fill="#464646"/><rect x="459.12" y="168.2" width="1" height="1" fill="#464646"/><rect x="473.70" y="168.2" width="1" height="1" fill="#464646"/><rect x="488.28" y="168.2" width="1" height="1" fill="#464646"/><rect x="502.86" y="168.2" width="1" height="1" fill="#464646"/><rect x="517.44" y="168.2" width="1" height="1" fill="#464646"/><rect x="532.02" y="168.2" width="1" height="1" fill="#464646"/><rect x="546.60" y="168.2" width="1" height="1" fill="#464646"/><rect x="561.18" y="168.2" width="1" height="1" fill="#464646"/><rect x="575.76" y="168.2" width="1" height="1" fill="#464646"/><rect x="590.34" y="168.2" width="1" height="1" fill="#464646"/><rect x="604.92" y="168.2" width="1" height="1" fill="#464646"/><rect x="619.50" y="168.2" width="1" height="1" fill="#464646"/><rect x="634.08" y="168.2" width="1" height="1" fill="#464646"/><rect x="648.66" y="168.2" width="1" height="1" fill="#464646"/><rect x="663.24" y="168.2" width="1" height="1" fill="#464646"/><rect x="677.82" y="168.2" width="1" height="1" fill="#464646"/><rect x="692.40" y="168.2" width="1" height="1" fill="#464646"/><rect x="706.98" y="168.2" width="1" height="1" fill="#464646"/><rect x="721.56" y="168.2" width="1" height="1" fill="#464646"/><rect x="7.14" y="158.6" width="1" height="1" fill="#464646"/><rect x="21.72" y="158.6" width="1" height="1" fill="#464646"/><rect x="36.30" y="158.6" width="1" height="1" fill="#464646"/><rect x="50.88" y="158.6" width="1" height="1" fill="#464646"/><rect x="65.46" y="158.6" width="1" height="1" fill="#464646"/><rect x="80.04" y="158.6" width="1" height="1" fill="#464646"/><rect x="94.62" y="158.6" width="1" height="1" fill="#464646"/><rect x="109.20" y="158.6" width="1" height="1" fill="#464646"/><rect x="123.78" y="158.6" width="1" height="1" fill="#464646"/><rect x="138.36" y="158.6" width="1" height="1" fill="#464646"/><rect x="152.94" y="158.6" width="1" height="1" fill="#464646"/><rect x="167.52" y="158.6" width="1" height="1" fill="#464646"/><rect x="182.10" y="158.6" width="1" height="1" fill="#464646"/><rect x="196.68" y="158.6" width="1" height="1" fill="#464646"/><rect x="211.26" y="158.6" width="1" height="1" fill="#464646"/><rect x="225.84" y="158.6" width="1" height="1" fill="#464646"/><rect x="240.42" y="158.6" width="1" height="1" fill="#464646"/><rect x="255.00" y="158.6" width="1" height="1" fill="#464646"/><rect x="269.58" y="158.6" width="1" height="1" fill="#464646"/><rect x="284.16" y="158.6" width="1" height="1" fill="#464646"/><rect x="298.74" y="158.6" width="1" height="1" fill="#464646"/><rect x="313.32" y="158.6" width="1" height="1" fill="#464646"/><rect x="327.90" y="158.6" width="1" height="1" fill="#464646"/><rect x="342.48" y="158.6" width="1" height="1" fill="#464646"/><rect x="357.06" y="158.6" width="1" height="1" fill="#464646"/><rect x="371.64" y="158.6" width="1" height="1" fill="#464646"/><rect x="386.22" y="158.6" width="1" height="1" fill="#464646"/><rect x="400.80" y="158.6" width="1" height="1" fill="#464646"/><rect x="415.38" y="158.6" width="1" height="1" fill="#464646"/><rect x="429.96" y="158.6" width="1" height="1" fill="#464646"/><rect x="444.54" y="158.6" width="1" height="1" fill="#464646"/><rect x="459.12" y="158.6" width="1" height="1" fill="#464646"/><rect x="473.70" y="158.6" width="1" height="1" fill="#464646"/><rect x="488.28" y="158.6" width="1" height="1" fill="#464646"/><rect x="502.86" y="158.6" width="1" height="1" fill="#464646"/><rect x="517.44" y="158.6" width="1" height="1" fill="#464646"/><rect x="532.02" y="158.6" width="1" height="1" fill="#464646"/><rect x="546.60" y="158.6" width="1" height="1" fill="#464646"/><rect x="561.18" y="158.6" width="1" height="1" fill="#464646"/><rect x="575.76" y="158.6" width="1" height="1" fill="#464646"/><rect x="590.34" y="158.6" width="1" height="1" fill="#464646"/><rect x="604.92" y="158.6" width="1" height="1" fill="#464646"/><rect x="619.50" y="158.6" width="1" height="1" fill="#464646"/><rect x="634.08" y="158.6" width="1" height="1" fill="#464646"/><rect x="648.66" y="158.6" width="1" height="1" fill="#464646"/><rect x="663.24" y="158.6" width="1" height="1" fill="#464646"/><rect x="677.82" y="158.6" width="1" height="1" fill="#464646"/><rect x="692.40" y="158.6" width="1" height="1" fill="#464646"/><rect x="706.98" y="158.6" width="1" height="1" fill="#464646"/><rect x="721.56" y="158.6" width="1" height="1" fill="#464646"/><rect x="7.14" y="148.9" width="1" height="1" fill="#464646"/><rect x="21.72" y="148.9" width="1" height="1" fill="#464646"/><rect x="36.30" y="148.9" width="1" height="1" fill="#464646"/><rect x="50.88" y="148.9" width="1" height="1" fill="#464646"/><rect x="65.46" y="148.9" width="1" height="1" fill="#464646"/><rect x="80.04" y="148.9" width="1" height="1" fill="#464646"/><rect x="94.62" y="148.9" width="1" height="1" fill="#464646"/><rect x="109.20" y="148.9" width="1" height="1" fill="#464646"/><rect x="123.78" y="148.9" width="1" height="1" fill="#464646"/><rect x="138.36" y="148.9" width="1" height="1" fill="#464646"/><rect x="152.94" y="148.9" width="1" height="1" fill="#464646"/><rect x="167.52" y="148.9" width="1" height="1" fill="#464646"/><rect x="182.10" y="148.9" width="1" height="1" fill="#464646"/><rect x="196.68" y="148.9" width="1" height="1" fill="#464646"/><rect x="211.26" y="148.9" width="1" height="1" fill="#464646"/><rect x="225.84" y="148.9" width="1" height="1" fill="#464646"/><rect x="240.42" y="148.9" width="1" height="1" fill="#464646"/><rect x="255.00" y="148.9" width="1" height="1" fill="#464646"/><rect x="269.58" y="148.9" width="1" height="1" fill="#464646"/><rect x="284.16" y="148.9" width="1" height="1" fill="#464646"/><rect x="298.74" y="148.9" width="1" height="1" fill="#464646"/><rect x="313.32" y="148.9" width="1" height="1" fill="#464646"/><rect x="327.90" y="148.9" width="1" height="1" fill="#464646"/><rect x="342.48" y="148.9" width="1" height="1" fill="#464646"/><rect x="357.06" y="148.9" width="1" height="1" fill="#464646"/><rect x="371.64" y="148.9" width="1" height="1" fill="#464646"/><rect x="386.22" y="148.9" width="1" height="1" fill="#464646"/><rect x="400.80" y="148.9" width="1" height="1" fill="#464646"/><rect x="415.38" y="148.9" width="1" height="1" fill="#464646"/><rect x="429.96" y="148.9" width="1" height="1" fill="#464646"/><rect x="444.54" y="148.9" width="1" height="1" fill="#464646"/><rect x="459.12" y="148.9" width="1" height="1" fill="#464646"/><rect x="473.70" y="148.9" width="1" height="1" fill="#464646"/><rect x="488.28" y="148.9" width="1" height="1" fill="#464646"/><rect x="502.86" y="148.9" width="1" height="1" fill="#464646"/><rect x="517.44" y="148.9" width="1" height="1" fill="#464646"/><rect x="532.02" y="148.9" width="1" height="1" fill="#464646"/><rect x="546.60" y="148.9" width="1" height="1" fill="#464646"/><rect x="561.18" y="148.9" width="1" height="1" fill="#464646"/><rect x="575.76" y="148.9" width="1" height="1" fill="#464646"/><rect x="590.34" y="148.9" width="1" height="1" fill="#464646"/><rect x="604.92" y="148.9" width="1" height="1" fill="#464646"/><rect x="619.50" y="148.9" width="1" height="1" fill="#464646"/><rect x="634.08" y="148.9" width="1" height="1" fill="#464646"/><rect x="648.66" y="148.9" width="1" height="1" fill="#464646"/><rect x="663.24" y="148.9" width="1" height="1" fill="#464646"/><rect x="677.82" y="148.9" width="1" height="1" fill="#464646"/><rect x="692.40" y="148.9" width="1" height="1" fill="#464646"/><rect x="706.98" y="148.9" width="1" height="1" fill="#464646"/><rect x="721.56" y="148.9" width="1" height="1" fill="#464646"/><rect x="7.14" y="139.2" width="1" height="1" fill="#464646"/><rect x="21.72" y="139.2" width="1" height="1" fill="#464646"/><rect x="36.30" y="139.2" width="1" height="1" fill="#464646"/><rect x="50.88" y="139.2" width="1" height="1" fill="#464646"/><rect x="65.46" y="139.2" width="1" height="1" fill="#464646"/><rect x="80.04" y="139.2" width="1" height="1" fill="#464646"/><rect x="94.62" y="139.2" width="1" height="1" fill="#464646"/><rect x="109.20" y="139.2" width="1" height="1" fill="#464646"/><rect x="123.78" y="139.2" width="1" height="1" fill="#464646"/><rect x="138.36" y="139.2" width="1" height="1" fill="#464646"/><rect x="152.94" y="139.2" width="1" height="1" fill="#464646"/><rect x="167.52" y="139.2" width="1" height="1" fill="#464646"/><rect x="182.10" y="139.2" width="1" height="1" fill="#464646"/><rect x="196.68" y="139.2" width="1" height="1" fill="#464646"/><rect x="211.26" y="139.2" width="1" height="1" fill="#464646"/><rect x="225.84" y="139.2" width="1" height="1" fill="#464646"/><rect x="240.42" y="139.2" width="1" height="1" fill="#464646"/><rect x="255.00" y="139.2" width="1" height="1" fill="#464646"/><rect x="269.58" y="139.2" width="1" height="1" fill="#464646"/><rect x="284.16" y="139.2" width="1" height="1" fill="#464646"/><rect x="298.74" y="139.2" width="1" height="1" fill="#464646"/><rect x="313.32" y="139.2" width="1" height="1" fill="#464646"/><rect x="327.90" y="139.2" width="1" height="1" fill="#464646"/><rect x="342.48" y="139.2" width="1" height="1" fill="#464646"/><rect x="357.06" y="139.2" width="1" height="1" fill="#464646"/><rect x="371.64" y="139.2" width="1" height="1" fill="#464646"/><rect x="386.22" y="139.2" width="1" height="1" fill="#464646"/><rect x="400.80" y="139.2" width="1" height="1" fill="#464646"/><rect x="415.38" y="139.2" width="1" height="1" fill="#464646"/><rect x="429.96" y="139.2" width="1" height="1" fill="#464646"/><rect x="444.54" y="139.2" width="1" height="1" fill="#464646"/><rect x="459.12" y="139.2" width="1" height="1" fill="#464646"/><rect x="473.70" y="139.2" width="1" height="1" fill="#464646"/><rect x="488.28" y="139.2" width="1" height="1" fill="#464646"/><rect x="502.86" y="139.2" width="1" height="1" fill="#464646"/><rect x="517.44" y="139.2" width="1" height="1" fill="#464646"/><rect x="532.02" y="139.2" width="1" height="1" fill="#464646"/><rect x="546.60" y="139.2" width="1" height="1" fill="#464646"/><rect x="561.18" y="139.2" width="1" height="1" fill="#464646"/><rect x="575.76" y="139.2" width="1" height="1" fill="#464646"/><rect x="590.34" y="139.2" width="1" height="1" fill="#464646"/><rect x="604.92" y="139.2" width="1" height="1" fill="#464646"/><rect x="619.50" y="139.2" width="1" height="1" fill="#464646"/><rect x="634.08" y="139.2" width="1" height="1" fill="#464646"/><rect x="648.66" y="139.2" width="1" height="1" fill="#464646"/><rect x="663.24" y="139.2" width="1" height="1" fill="#464646"/><rect x="677.82" y="139.2" width="1" height="1" fill="#464646"/><rect x="692.40" y="139.2" width="1" height="1" fill="#464646"/><rect x="706.98" y="139.2" width="1" height="1" fill="#464646"/><rect x="721.56" y="139.2" width="1" height="1" fill="#464646"/><rect x="7.14" y="129.6" width="1" height="1" fill="#464646"/><rect x="21.72" y="129.6" width="1" height="1" fill="#464646"/><rect x="36.30" y="129.6" width="1" height="1" fill="#464646"/><rect x="50.88" y="129.6" width="1" height="1" fill="#464646"/><rect x="65.46" y="129.6" width="1" height="1" fill="#464646"/><rect x="80.04" y="129.6" width="1" height="1" fill="#464646"/><rect x="94.62" y="129.6" width="1" height="1" fill="#464646"/><rect x="109.20" y="129.6" width="1" height="1" fill="#464646"/><rect x="123.78" y="129.6" width="1" height="1" fill="#464646"/><rect x="138.36" y="129.6" width="1" height="1" fill="#464646"/><rect x="152.94" y="129.6" width="1" height="1" fill="#464646"/><rect x="167.52" y="129.6" width="1" height="1" fill="#464646"/><rect x="182.10" y="129.6" width="1" height="1" fill="#464646"/><rect x="196.68" y="129.6" width="1" height="1" fill="#464646"/><rect x="211.26" y="129.6" width="1" height="1" fill="#464646"/><rect x="225.84" y="129.6" width="1" height="1" fill="#464646"/><rect x="240.42" y="129.6" width="1" height="1" fill="#464646"/><rect x="255.00" y="129.6" width="1" height="1" fill="#464646"/><rect x="269.58" y="129.6" width="1" height="1" fill="#464646"/><rect x="284.16" y="129.6" width="1" height="1" fill="#464646"/><rect x="298.74" y="129.6" width="1" height="1" fill="#464646"/><rect x="313.32" y="129.6" width="1" height="1" fill="#464646"/><rect x="327.90" y="129.6" width="1" height="1" fill="#464646"/><rect x="342.48" y="129.6" width="1" height="1" fill="#464646"/><rect x="357.06" y="129.6" width="1" height="1" fill="#464646"/><rect x="371.64" y="129.6" width="1" height="1" fill="#464646"/><rect x="386.22" y="129.6" width="1" height="1" fill="#464646"/><rect x="400.80" y="129.6" width="1" height="1" fill="#464646"/><rect x="415.38" y="129.6" width="1" height="1" fill="#464646"/><rect x="429.96" y="129.6" width="1" height="1" fill="#464646"/><rect x="444.54" y="129.6" width="1" height="1" fill="#464646"/><rect x="459.12" y="129.6" width="1" height="1" fill="#464646"/><rect x="473.70" y="129.6" width="1" height="1" fill="#464646"/><rect x="488.28" y="129.6" width="1" height="1" fill="#464646"/><rect x="502.86" y="129.6" width="1" height="1" fill="#464646"/><rect x="517.44" y="129.6" width="1" height="1" fill="#464646"/><rect x="532.02" y="129.6" width="1" height="1" fill="#464646"/><rect x="546.60" y="129.6" width="1" height="1" fill="#464646"/><rect x="561.18" y="129.6" width="1" height="1" fill="#464646"/><rect x="575.76" y="129.6" width="1" height="1" fill="#464646"/><rect x="590.34" y="129.6" width="1" height="1" fill="#464646"/><rect x="604.92" y="129.6" width="1" height="1" fill="#464646"/><rect x="619.50" y="129.6" width="1" height="1" fill="#464646"/><rect x="634.08" y="129.6" width="1" height="1" fill="#464646"/><rect x="648.66" y="129.6" width="1" height="1" fill="#464646"/><rect x="663.24" y="129.6" width="1" height="1" fill="#464646"/><rect x="677.82" y="129.6" width="1" height="1" fill="#464646"/><rect x="692.40" y="129.6" width="1" height="1" fill="#464646"/><rect x="706.98" y="129.6" width="1" height="1" fill="#464646"/><rect x="721.56" y="129.6" width="1" height="1" fill="#464646"/><rect x="7.14" y="298.4" width="1" height="1" fill="#464646"/><rect x="21.72" y="298.4" width="1" height="1" fill="#464646"/><rect x="36.30" y="298.4" width="1" height="1" fill="#464646"/><rect x="50.88" y="298.4" width="1" height="1" fill="#464646"/><rect x="65.46" y="298.4" width="1" height="1" fill="#464646"/><rect x="80.04" y="298.4" width="1" height="1" fill="#464646"/><rect x="94.62" y="298.4" width="1" height="1" fill="#464646"/><rect x="109.20" y="298.4" width="1" height="1" fill="#464646"/><rect x="123.78" y="298.4" width="1" height="1" fill="#464646"/><rect x="138.36" y="298.4" width="1" height="1" fill="#464646"/><rect x="152.94" y="298.4" width="1" height="1" fill="#464646"/><rect x="167.52" y="298.4" width="1" height="1" fill="#464646"/><rect x="182.10" y="298.4" width="1" height="1" fill="#464646"/><rect x="196.68" y="298.4" width="1" height="1" fill="#464646"/><rect x="211.26" y="298.4" width="1" height="1" fill="#464646"/><rect x="225.84" y="298.4" width="1" height="1" fill="#464646"/><rect x="240.42" y="298.4" width="1" height="1" fill="#464646"/><rect x="255.00" y="298.4" width="1" height="1" fill="#464646"/><rect x="269.58" y="298.4" width="1" height="1" fill="#464646"/><rect x="284.16" y="298.4" width="1" height="1" fill="#464646"/><rect x="298.74" y="298.4" width="1" height="1" fill="#464646"/><rect x="313.32" y="298.4" width="1" height="1" fill="#464646"/><rect x="327.90" y="298.4" width="1" height="1" fill="#464646"/><rect x="342.48" y="298.4" width="1" height="1" fill="#464646"/><rect x="357.06" y="298.4" width="1" height="1" fill="#464646"/><rect x="371.64" y="298.4" width="1" height="1" fill="#464646"/><rect x="386.22" y="298.4" width="1" height="1" fill="#464646"/><rect x="400.80" y="298.4" width="1" height="1" fill="#464646"/><rect x="415.38" y="298.4" width="1" height="1" fill="#464646"/><rect x="429.96" y="298.4" width="1" height="1" fill="#464646"/><rect x="444.54" y="298.4" width="1" height="1" fill="#464646"/><rect x="459.12" y="298.4" width="1" height="1" fill="#464646"/><rect x="473.70" y="298.4" width="1" height="1" fill="#464646"/><rect x="488.28" y="298.4" width="1" height="1" fill="#464646"/><rect x="502.86" y="298.4" width="1" height="1" fill="#464646"/><rect x="517.44" y="298.4" width="1" height="1" fill="#464646"/><rect x="532.02" y="298.4" width="1" height="1" fill="#464646"/><rect x="546.60" y="298.4" width="1" height="1" fill="#464646"/><rect x="561.18" y="298.4" width="1" height="1" fill="#464646"/><rect x="575.76" y="298.4" width="1" height="1" fill="#464646"/><rect x="590.34" y="298.4" width="1" height="1" fill="#464646"/><rect x="604.92" y="298.4" width="1" height="1" fill="#464646"/><rect x="619.50" y="298.4" width="1" height="1" fill="#464646"/><rect x="634.08" y="298.4" width="1" height="1" fill="#464646"/><rect x="648.66" y="298.4" width="1" height="1" fill="#464646"/><rect x="663.24" y="298.4" width="1" height="1" fill="#464646"/><rect x="677.82" y="298.4" width="1" height="1" fill="#464646"/><rect x="692.40" y="298.4" width="1" height="1" fill="#464646"/><rect x="706.98" y="298.4" width="1" height="1" fill="#464646"/><rect x="721.56" y="298.4" width="1" height="1" fill="#464646"/><rect x="7.14" y="288.7" width="1" height="1" fill="#464646"/><rect x="21.72" y="288.7" width="1" height="1" fill="#464646"/><rect x="36.30" y="288.7" width="1" height="1" fill="#464646"/><rect x="50.88" y="288.7" width="1" height="1" fill="#464646"/><rect x="65.46" y="288.7" width="1" height="1" fill="#464646"/><rect x="80.04" y="288.7" width="1" height="1" fill="#464646"/><rect x="94.62" y="288.7" width="1" height="1" fill="#464646"/><rect x="109.20" y="288.7" width="1" height="1" fill="#464646"/><rect x="123.78" y="288.7" width="1" height="1" fill="#464646"/><rect x="138.36" y="288.7" width="1" height="1" fill="#464646"/><rect x="152.94" y="288.7" width="1" height="1" fill="#464646"/><rect x="167.52" y="288.7" width="1" height="1" fill="#464646"/><rect x="182.10" y="288.7" width="1" height="1" fill="#464646"/><rect x="196.68" y="288.7" width="1" height="1" fill="#464646"/><rect x="211.26" y="288.7" width="1" height="1" fill="#464646"/><rect x="225.84" y="288.7" width="1" height="1" fill="#464646"/><rect x="240.42" y="288.7" width="1" height="1" fill="#464646"/><rect x="255.00" y="288.7" width="1" height="1" fill="#464646"/><rect x="269.58" y="288.7" width="1" height="1" fill="#464646"/><rect x="284.16" y="288.7" width="1" height="1" fill="#464646"/><rect x="298.74" y="288.7" width="1" height="1" fill="#464646"/><rect x="313.32" y="288.7" width="1" height="1" fill="#464646"/><rect x="327.90" y="288.7" width="1" height="1" fill="#464646"/><rect x="342.48" y="288.7" width="1" height="1" fill="#464646"/><rect x="357.06" y="288.7" width="1" height="1" fill="#464646"/><rect x="371.64" y="288.7" width="1" height="1" fill="#464646"/><rect x="386.22" y="288.7" width="1" height="1" fill="#464646"/><rect x="400.80" y="288.7" width="1" height="1" fill="#464646"/><rect x="415.38" y="288.7" width="1" height="1" fill="#464646"/><rect x="429.96" y="288.7" width="1" height="1" fill="#464646"/><rect x="444.54" y="288.7" width="1" height="1" fill="#464646"/><rect x="459.12" y="288.7" width="1" height="1" fill="#464646"/><rect x="473.70" y="288.7" width="1" height="1" fill="#464646"/><rect x="488.28" y="288.7" width="1" height="1" fill="#464646"/><rect x="502.86" y="288.7" width="1" height="1" fill="#464646"/><rect x="517.44" y="288.7" width="1" height="1" fill="#464646"/><rect x="532.02" y="288.7" width="1" height="1" fill="#464646"/><rect x="546.60" y="288.7" width="1" height="1" fill="#464646"/><rect x="561.18" y="288.7" width="1" height="1" fill="#464646"/><rect x="575.76" y="288.7" width="1" height="1" fill="#464646"/><rect x="590.34" y="288.7" width="1" height="1" fill="#464646"/><rect x="604.92" y="288.7" width="1" height="1" fill="#464646"/><rect x="619.50" y="288.7" width="1" height="1" fill="#464646"/><rect x="634.08" y="288.7" width="1" height="1" fill="#464646"/><rect x="648.66" y="288.7" width="1" height="1" fill="#464646"/><rect x="663.24" y="288.7" width="1" height="1" fill="#464646"/><rect x="677.82" y="288.7" width="1" height="1" fill="#464646"/><rect x="692.40" y="288.7" width="1" height="1" fill="#464646"/><rect x="706.98" y="288.7" width="1" height="1" fill="#464646"/><rect x="721.56" y="288.7" width="1" height="1" fill="#464646"/><rect x="7.14" y="278.9" width="1" height="1" fill="#464646"/><rect x="21.72" y="278.9" width="1" height="1" fill="#464646"/><rect x="36.30" y="278.9" width="1" height="1" fill="#464646"/><rect x="50.88" y="278.9" width="1" height="1" fill="#464646"/><rect x="65.46" y="278.9" width="1" height="1" fill="#464646"/><rect x="80.04" y="278.9" width="1" height="1" fill="#464646"/><rect x="94.62" y="278.9" width="1" height="1" fill="#464646"/><rect x="109.20" y="278.9" width="1" height="1" fill="#464646"/><rect x="123.78" y="278.9" width="1" height="1" fill="#464646"/><rect x="138.36" y="278.9" width="1" height="1" fill="#464646"/><rect x="152.94" y="278.9" width="1" height="1" fill="#464646"/><rect x="167.52" y="278.9" width="1" height="1" fill="#464646"/><rect x="182.10" y="278.9" width="1" height="1" fill="#464646"/><rect x="196.68" y="278.9" width="1" height="1" fill="#464646"/><rect x="211.26" y="278.9" width="1" height="1" fill="#464646"/><rect x="225.84" y="278.9" width="1" height="1" fill="#464646"/><rect x="240.42" y="278.9" width="1" height="1" fill="#464646"/><rect x="255.00" y="278.9" width="1" height="1" fill="#464646"/><rect x="269.58" y="278.9" width="1" height="1" fill="#464646"/><rect x="284.16" y="278.9" width="1" height="1" fill="#464646"/><rect x="298.74" y="278.9" width="1" height="1" fill="#464646"/><rect x="313.32" y="278.9" width="1" height="1" fill="#464646"/><rect x="327.90" y="278.9" width="1" height="1" fill="#464646"/><rect x="342.48" y="278.9" width="1" height="1" fill="#464646"/><rect x="357.06" y="278.9" width="1" height="1" fill="#464646"/><rect x="371.64" y="278.9" width="1" height="1" fill="#464646"/><rect x="386.22" y="278.9" width="1" height="1" fill="#464646"/><rect x="400.80" y="278.9" width="1" height="1" fill="#464646"/><rect x="415.38" y="278.9" width="1" height="1" fill="#464646"/><rect x="429.96" y="278.9" width="1" height="1" fill="#464646"/><rect x="444.54" y="278.9" width="1" height="1" fill="#464646"/><rect x="459.12" y="278.9" width="1" height="1" fill="#464646"/><rect x="473.70" y="278.9" width="1" height="1" fill="#464646"/><rect x="488.28" y="278.9" width="1" height="1" fill="#464646"/><rect x="502.86" y="278.9" width="1" height="1" fill="#464646"/><rect x="517.44" y="278.9" width="1" height="1" fill="#464646"/><rect x="532.02" y="278.9" width="1" height="1" fill="#464646"/><rect x="546.60" y="278.9" width="1" height="1" fill="#464646"/><rect x="561.18" y="278.9" width="1" height="1" fill="#464646"/><rect x="575.76" y="278.9" width="1" height="1" fill="#464646"/><rect x="590.34" y="278.9" width="1" height="1" fill="#464646"/><rect x="604.92" y="278.9" width="1" height="1" fill="#464646"/><rect x="619.50" y="278.9" width="1" height="1" fill="#464646"/><rect x="634.08" y="278.9" width="1" height="1" fill="#464646"/><rect x="648.66" y="278.9" width="1" height="1" fill="#464646"/><rect x="663.24" y="278.9" width="1" height="1" fill="#464646"/><rect x="677.82" y="278.9" width="1" height="1" fill="#464646"/><rect x="692.40" y="278.9" width="1" height="1" fill="#464646"/><rect x="706.98" y="278.9" width="1" height="1" fill="#464646"/><rect x="721.56" y="278.9" width="1" height="1" fill="#464646"/><rect x="7.14" y="269.2" width="1" height="1" fill="#464646"/><rect x="21.72" y="269.2" width="1" height="1" fill="#464646"/><rect x="36.30" y="269.2" width="1" height="1" fill="#464646"/><rect x="50.88" y="269.2" width="1" height="1" fill="#464646"/><rect x="65.46" y="269.2" width="1" height="1" fill="#464646"/><rect x="80.04" y="269.2" width="1" height="1" fill="#464646"/><rect x="94.62" y="269.2" width="1" height="1" fill="#464646"/><rect x="109.20" y="269.2" width="1" height="1" fill="#464646"/><rect x="123.78" y="269.2" width="1" height="1" fill="#464646"/><rect x="138.36" y="269.2" width="1" height="1" fill="#464646"/><rect x="152.94" y="269.2" width="1" height="1" fill="#464646"/><rect x="167.52" y="269.2" width="1" height="1" fill="#464646"/><rect x="182.10" y="269.2" width="1" height="1" fill="#464646"/><rect x="196.68" y="269.2" width="1" height="1" fill="#464646"/><rect x="211.26" y="269.2" width="1" height="1" fill="#464646"/><rect x="225.84" y="269.2" width="1" height="1" fill="#464646"/><rect x="240.42" y="269.2" width="1" height="1" fill="#464646"/><rect x="255.00" y="269.2" width="1" height="1" fill="#464646"/><rect x="269.58" y="269.2" width="1" height="1" fill="#464646"/><rect x="284.16" y="269.2" width="1" height="1" fill="#464646"/><rect x="298.74" y="269.2" width="1" height="1" fill="#464646"/><rect x="313.32" y="269.2" width="1" height="1" fill="#464646"/><rect x="327.90" y="269.2" width="1" height="1" fill="#464646"/><rect x="342.48" y="269.2" width="1" height="1" fill="#464646"/><rect x="357.06" y="269.2" width="1" height="1" fill="#464646"/><rect x="371.64" y="269.2" width="1" height="1" fill="#464646"/><rect x="386.22" y="269.2" width="1" height="1" fill="#464646"/><rect x="400.80" y="269.2" width="1" height="1" fill="#464646"/><rect x="415.38" y="269.2" width="1" height="1" fill="#464646"/><rect x="429.96" y="269.2" width="1" height="1" fill="#464646"/><rect x="444.54" y="269.2" width="1" height="1" fill="#464646"/><rect x="459.12" y="269.2" width="1" height="1" fill="#464646"/><rect x="473.70" y="269.2" width="1" height="1" fill="#464646"/><rect x="488.28" y="269.2" width="1" height="1" fill="#464646"/><rect x="502.86" y="269.2" width="1" height="1" fill="#464646"/><rect x="517.44" y="269.2" width="1" height="1" fill="#464646"/><rect x="532.02" y="269.2" width="1" height="1" fill="#464646"/><rect x="546.60" y="269.2" width="1" height="1" fill="#464646"/><rect x="561.18" y="269.2" width="1" height="1" fill="#464646"/><rect x="575.76" y="269.2" width="1" height="1" fill="#464646"/><rect x="590.34" y="269.2" width="1" height="1" fill="#464646"/><rect x="604.92" y="269.2" width="1" height="1" fill="#464646"/><rect x="619.50" y="269.2" width="1" height="1" fill="#464646"/><rect x="634.08" y="269.2" width="1" height="1" fill="#464646"/><rect x="648.66" y="269.2" width="1" height="1" fill="#464646"/><rect x="663.24" y="269.2" width="1" height="1" fill="#464646"/><rect x="677.82" y="269.2" width="1" height="1" fill="#464646"/><rect x="692.40" y="269.2" width="1" height="1" fill="#464646"/><rect x="706.98" y="269.2" width="1" height="1" fill="#464646"/><rect x="721.56" y="269.2" width="1" height="1" fill="#464646"/><rect x="7.14" y="259.5" width="1" height="1" fill="#464646"/><rect x="21.72" y="259.5" width="1" height="1" fill="#464646"/><rect x="36.30" y="259.5" width="1" height="1" fill="#464646"/><rect x="50.88" y="259.5" width="1" height="1" fill="#464646"/><rect x="65.46" y="259.5" width="1" height="1" fill="#464646"/><rect x="80.04" y="259.5" width="1" height="1" fill="#464646"/><rect x="94.62" y="259.5" width="1" height="1" fill="#464646"/><rect x="109.20" y="259.5" width="1" height="1" fill="#464646"/><rect x="123.78" y="259.5" width="1" height="1" fill="#464646"/><rect x="138.36" y="259.5" width="1" height="1" fill="#464646"/><rect x="152.94" y="259.5" width="1" height="1" fill="#464646"/><rect x="167.52" y="259.5" width="1" height="1" fill="#464646"/><rect x="182.10" y="259.5" width="1" height="1" fill="#464646"/><rect x="196.68" y="259.5" width="1" height="1" fill="#464646"/><rect x="211.26" y="259.5" width="1" height="1" fill="#464646"/><rect x="225.84" y="259.5" width="1" height="1" fill="#464646"/><rect x="240.42" y="259.5" width="1" height="1" fill="#464646"/><rect x="255.00" y="259.5" width="1" height="1" fill="#464646"/><rect x="269.58" y="259.5" width="1" height="1" fill="#464646"/><rect x="284.16" y="259.5" width="1" height="1" fill="#464646"/><rect x="298.74" y="259.5" width="1" height="1" fill="#464646"/><rect x="313.32" y="259.5" width="1" height="1" fill="#464646"/><rect x="327.90" y="259.5" width="1" height="1" fill="#464646"/><rect x="342.48" y="259.5" width="1" height="1" fill="#464646"/><rect x="357.06" y="259.5" width="1" height="1" fill="#464646"/><rect x="371.64" y="259.5" width="1" height="1" fill="#464646"/><rect x="386.22" y="259.5" width="1" height="1" fill="#464646"/><rect x="400.80" y="259.5" width="1" height="1" fill="#464646"/><rect x="415.38" y="259.5" width="1" height="1" fill="#464646"/><rect x="429.96" y="259.5" width="1" height="1" fill="#464646"/><rect x="444.54" y="259.5" width="1" height="1" fill="#464646"/><rect x="459.12" y="259.5" width="1" height="1" fill="#464646"/><rect x="473.70" y="259.5" width="1" height="1" fill="#464646"/><rect x="488.28" y="259.5" width="1" height="1" fill="#464646"/><rect x="502.86" y="259.5" width="1" height="1" fill="#464646"/><rect x="517.44" y="259.5" width="1" height="1" fill="#464646"/><rect x="532.02" y="259.5" width="1" height="1" fill="#464646"/><rect x="546.60" y="259.5" width="1" height="1" fill="#464646"/><rect x="561.18" y="259.5" width="1" height="1" fill="#464646"/><rect x="575.76" y="259.5" width="1" height="1" fill="#464646"/><rect x="590.34" y="259.5" width="1" height="1" fill="#464646"/><rect x="604.92" y="259.5" width="1" height="1" fill="#464646"/><rect x="619.50" y="259.5" width="1" height="1" fill="#464646"/><rect x="634.08" y="259.5" width="1" height="1" fill="#464646"/><rect x="648.66" y="259.5" width="1" height="1" fill="#464646"/><rect x="663.24" y="259.5" width="1" height="1" fill="#464646"/><rect x="677.82" y="259.5" width="1" height="1" fill="#464646"/><rect x="692.40" y="259.5" width="1" height="1" fill="#464646"/><rect x="706.98" y="259.5" width="1" height="1" fill="#464646"/><rect x="721.56" y="259.5" width="1" height="1" fill="#464646"/><rect x="7.14" y="249.8" width="1" height="1" fill="#464646"/><rect x="21.72" y="249.8" width="1" height="1" fill="#464646"/><rect x="36.30" y="249.8" width="1" height="1" fill="#464646"/><rect x="50.88" y="249.8" width="1" height="1" fill="#464646"/><rect x="65.46" y="249.8" width="1" height="1" fill="#464646"/><rect x="80.04" y="249.8" width="1" height="1" fill="#464646"/><rect x="94.62" y="249.8" width="1" height="1" fill="#464646"/><rect x="109.20" y="249.8" width="1" height="1" fill="#464646"/><rect x="123.78" y="249.8" width="1" height="1" fill="#464646"/><rect x="138.36" y="249.8" width="1" height="1" fill="#464646"/><rect x="152.94" y="249.8" width="1" height="1" fill="#464646"/><rect x="167.52" y="249.8" width="1" height="1" fill="#464646"/><rect x="182.10" y="249.8" width="1" height="1" fill="#464646"/><rect x="196.68" y="249.8" width="1" height="1" fill="#464646"/><rect x="211.26" y="249.8" width="1" height="1" fill="#464646"/><rect x="225.84" y="249.8" width="1" height="1" fill="#464646"/><rect x="240.42" y="249.8" width="1" height="1" fill="#464646"/><rect x="255.00" y="249.8" width="1" height="1" fill="#464646"/><rect x="269.58" y="249.8" width="1" height="1" fill="#464646"/><rect x="284.16" y="249.8" width="1" height="1" fill="#464646"/><rect x="298.74" y="249.8" width="1" height="1" fill="#464646"/><rect x="313.32" y="249.8" width="1" height="1" fill="#464646"/><rect x="327.90" y="249.8" width="1" height="1" fill="#464646"/><rect x="342.48" y="249.8" width="1" height="1" fill="#464646"/><rect x="357.06" y="249.8" width="1" height="1" fill="#464646"/><rect x="371.64" y="249.8" width="1" height="1" fill="#464646"/><rect x="386.22" y="249.8" width="1" height="1" fill="#464646"/><rect x="400.80" y="249.8" width="1" height="1" fill="#464646"/><rect x="415.38" y="249.8" width="1" height="1" fill="#464646"/><rect x="429.96" y="249.8" width="1" height="1" fill="#464646"/><rect x="444.54" y="249.8" width="1" height="1" fill="#464646"/><rect x="459.12" y="249.8" width="1" height="1" fill="#464646"/><rect x="473.70" y="249.8" width="1" height="1" fill="#464646"/><rect x="488.28" y="249.8" width="1" height="1" fill="#464646"/><rect x="502.86" y="249.8" width="1" height="1" fill="#464646"/><rect x="517.44" y="249.8" width="1" height="1" fill="#464646"/><rect x="532.02" y="249.8" width="1" height="1" fill="#464646"/><rect x="546.60" y="249.8" width="1" height="1" fill="#464646"/><rect x="561.18" y="249.8" width="1" height="1" fill="#464646"/><rect x="575.76" y="249.8" width="1" height="1" fill="#464646"/><rect x="590.34" y="249.8" width="1" height="1" fill="#464646"/><rect x="604.92" y="249.8" width="1" height="1" fill="#464646"/><rect x="619.50" y="249.8" width="1" height="1" fill="#464646"/><rect x="634.08" y="249.8" width="1" height="1" fill="#464646"/><rect x="648.66" y="249.8" width="1" height="1" fill="#464646"/><rect x="663.24" y="249.8" width="1" height="1" fill="#464646"/><rect x="677.82" y="249.8" width="1" height="1" fill="#464646"/><rect x="692.40" y="249.8" width="1" height="1" fill="#464646"/><rect x="706.98" y="249.8" width="1" height="1" fill="#464646"/><rect x="721.56" y="249.8" width="1" height="1" fill="#464646"/><rect x="7.14" y="240.1" width="1" height="1" fill="#464646"/><rect x="21.72" y="240.1" width="1" height="1" fill="#464646"/><rect x="36.30" y="240.1" width="1" height="1" fill="#464646"/><rect x="50.88" y="240.1" width="1" height="1" fill="#464646"/><rect x="65.46" y="240.1" width="1" height="1" fill="#464646"/><rect x="80.04" y="240.1" width="1" height="1" fill="#464646"/><rect x="94.62" y="240.1" width="1" height="1" fill="#464646"/><rect x="109.20" y="240.1" width="1" height="1" fill="#464646"/><rect x="123.78" y="240.1" width="1" height="1" fill="#464646"/><rect x="138.36" y="240.1" width="1" height="1" fill="#464646"/><rect x="152.94" y="240.1" width="1" height="1" fill="#464646"/><rect x="167.52" y="240.1" width="1" height="1" fill="#464646"/><rect x="182.10" y="240.1" width="1" height="1" fill="#464646"/><rect x="196.68" y="240.1" width="1" height="1" fill="#464646"/><rect x="211.26" y="240.1" width="1" height="1" fill="#464646"/><rect x="225.84" y="240.1" width="1" height="1" fill="#464646"/><rect x="240.42" y="240.1" width="1" height="1" fill="#464646"/><rect x="255.00" y="240.1" width="1" height="1" fill="#464646"/><rect x="269.58" y="240.1" width="1" height="1" fill="#464646"/><rect x="284.16" y="240.1" width="1" height="1" fill="#464646"/><rect x="298.74" y="240.1" width="1" height="1" fill="#464646"/><rect x="313.32" y="240.1" width="1" height="1" fill="#464646"/><rect x="327.90" y="240.1" width="1" height="1" fill="#464646"/><rect x="342.48" y="240.1" width="1" height="1" fill="#464646"/><rect x="357.06" y="240.1" width="1" height="1" fill="#464646"/><rect x="371.64" y="240.1" width="1" height="1" fill="#464646"/><rect x="386.22" y="240.1" width="1" height="1" fill="#464646"/><rect x="400.80" y="240.1" width="1" height="1" fill="#464646"/><rect x="415.38" y="240.1" width="1" height="1" fill="#464646"/><rect x="429.96" y="240.1" width="1" height="1" fill="#464646"/><rect x="444.54" y="240.1" width="1" height="1" fill="#464646"/><rect x="459.12" y="240.1" width="1" height="1" fill="#464646"/><rect x="473.70" y="240.1" width="1" height="1" fill="#464646"/><rect x="488.28" y="240.1" width="1" height="1" fill="#464646"/><rect x="502.86" y="240.1" width="1" height="1" fill="#464646"/><rect x="517.44" y="240.1" width="1" height="1" fill="#464646"/><rect x="532.02" y="240.1" width="1" height="1" fill="#464646"/><rect x="546.60" y="240.1" width="1" height="1" fill="#464646"/><rect x="561.18" y="240.1" width="1" height="1" fill="#464646"/><rect x="575.76" y="240.1" width="1" height="1" fill="#464646"/><rect x="590.34" y="240.1" width="1" height="1" fill="#464646"/><rect x="604.92" y="240.1" width="1" height="1" fill="#464646"/><rect x="619.50" y="240.1" width="1" height="1" fill="#464646"/><rect x="634.08" y="240.1" width="1" height="1" fill="#464646"/><rect x="648.66" y="240.1" width="1" height="1" fill="#464646"/><rect x="663.24" y="240.1" width="1" height="1" fill="#464646"/><rect x="677.82" y="240.1" width="1" height="1" fill="#464646"/><rect x="692.40" y="240.1" width="1" height="1" fill="#464646"/><rect x="706.98" y="240.1" width="1" height="1" fill="#464646"/><rect x="721.56" y="240.1" width="1" height="1" fill="#464646"/><rect x="7.14" y="230.3" width="1" height="1" fill="#464646"/><rect x="21.72" y="230.3" width="1" height="1" fill="#464646"/><rect x="36.30" y="230.3" width="1" height="1" fill="#464646"/><rect x="50.88" y="230.3" width="1" height="1" fill="#464646"/><rect x="65.46" y="230.3" width="1" height="1" fill="#464646"/><rect x="80.04" y="230.3" width="1" height="1" fill="#464646"/><rect x="94.62" y="230.3" width="1" height="1" fill="#464646"/><rect x="109.20" y="230.3" width="1" height="1" fill="#464646"/><rect x="123.78" y="230.3" width="1" height="1" fill="#464646"/><rect x="138.36" y="230.3" width="1" height="1" fill="#464646"/><rect x="152.94" y="230.3" width="1" height="1" fill="#464646"/><rect x="167.52" y="230.3" width="1" height="1" fill="#464646"/><rect x="182.10" y="230.3" width="1" height="1" fill="#464646"/><rect x="196.68" y="230.3" width="1" height="1" fill="#464646"/><rect x="211.26" y="230.3" width="1" height="1" fill="#464646"/><rect x="225.84" y="230.3" width="1" height="1" fill="#464646"/><rect x="240.42" y="230.3" width="1" height="1" fill="#464646"/><rect x="255.00" y="230.3" width="1" height="1" fill="#464646"/><rect x="269.58" y="230.3" width="1" height="1" fill="#464646"/><rect x="284.16" y="230.3" width="1" height="1" fill="#464646"/><rect x="298.74" y="230.3" width="1" height="1" fill="#464646"/><rect x="313.32" y="230.3" width="1" height="1" fill="#464646"/><rect x="327.90" y="230.3" width="1" height="1" fill="#464646"/><rect x="342.48" y="230.3" width="1" height="1" fill="#464646"/><rect x="357.06" y="230.3" width="1" height="1" fill="#464646"/><rect x="371.64" y="230.3" width="1" height="1" fill="#464646"/><rect x="386.22" y="230.3" width="1" height="1" fill="#464646"/><rect x="400.80" y="230.3" width="1" height="1" fill="#464646"/><rect x="415.38" y="230.3" width="1" height="1" fill="#464646"/><rect x="429.96" y="230.3" width="1" height="1" fill="#464646"/><rect x="444.54" y="230.3" width="1" height="1" fill="#464646"/><rect x="459.12" y="230.3" width="1" height="1" fill="#464646"/><rect x="473.70" y="230.3" width="1" height="1" fill="#464646"/><rect x="488.28" y="230.3" width="1" height="1" fill="#464646"/><rect x="502.86" y="230.3" width="1" height="1" fill="#464646"/><rect x="517.44" y="230.3" width="1" height="1" fill="#464646"/><rect x="532.02" y="230.3" width="1" height="1" fill="#464646"/><rect x="546.60" y="230.3" width="1" height="1" fill="#464646"/><rect x="561.18" y="230.3" width="1" height="1" fill="#464646"/><rect x="575.76" y="230.3" width="1" height="1" fill="#464646"/><rect x="590.34" y="230.3" width="1" height="1" fill="#464646"/><rect x="604.92" y="230.3" width="1" height="1" fill="#464646"/><rect x="619.50" y="230.3" width="1" height="1" fill="#464646"/><rect x="634.08" y="230.3" width="1" height="1" fill="#464646"/><rect x="648.66" y="230.3" width="1" height="1" fill="#464646"/><rect x="663.24" y="230.3" width="1" height="1" fill="#464646"/><rect x="677.82" y="230.3" width="1" height="1" fill="#464646"/><rect x="692.40" y="230.3" width="1" height="1" fill="#464646"/><rect x="706.98" y="230.3" width="1" height="1" fill="#464646"/><rect x="721.56" y="230.3" width="1" height="1" fill="#464646"/><rect x="7.14" y="220.6" width="1" height="1" fill="#464646"/><rect x="21.72" y="220.6" width="1" height="1" fill="#464646"/><rect x="36.30" y="220.6" width="1" height="1" fill="#464646"/><rect x="50.88" y="220.6" width="1" height="1" fill="#464646"/><rect x="65.46" y="220.6" width="1" height="1" fill="#464646"/><rect x="80.04" y="220.6" width="1" height="1" fill="#464646"/><rect x="94.62" y="220.6" width="1" height="1" fill="#464646"/><rect x="109.20" y="220.6" width="1" height="1" fill="#464646"/><rect x="123.78" y="220.6" width="1" height="1" fill="#464646"/><rect x="138.36" y="220.6" width="1" height="1" fill="#464646"/><rect x="152.94" y="220.6" width="1" height="1" fill="#464646"/><rect x="167.52" y="220.6" width="1" height="1" fill="#464646"/><rect x="182.10" y="220.6" width="1" height="1" fill="#464646"/><rect x="196.68" y="220.6" width="1" height="1" fill="#464646"/><rect x="211.26" y="220.6" width="1" height="1" fill="#464646"/><rect x="225.84" y="220.6" width="1" height="1" fill="#464646"/><rect x="240.42" y="220.6" width="1" height="1" fill="#464646"/><rect x="255.00" y="220.6" width="1" height="1" fill="#464646"/><rect x="269.58" y="220.6" width="1" height="1" fill="#464646"/><rect x="284.16" y="220.6" width="1" height="1" fill="#464646"/><rect x="298.74" y="220.6" width="1" height="1" fill="#464646"/><rect x="313.32" y="220.6" width="1" height="1" fill="#464646"/><rect x="327.90" y="220.6" width="1" height="1" fill="#464646"/><rect x="342.48" y="220.6" width="1" height="1" fill="#464646"/><rect x="357.06" y="220.6" width="1" height="1" fill="#464646"/><rect x="371.64" y="220.6" width="1" height="1" fill="#464646"/><rect x="386.22" y="220.6" width="1" height="1" fill="#464646"/><rect x="400.80" y="220.6" width="1" height="1" fill="#464646"/><rect x="415.38" y="220.6" width="1" height="1" fill="#464646"/><rect x="429.96" y="220.6" width="1" height="1" fill="#464646"/><rect x="444.54" y="220.6" width="1" height="1" fill="#464646"/><rect x="459.12" y="220.6" width="1" height="1" fill="#464646"/><rect x="473.70" y="220.6" width="1" height="1" fill="#464646"/><rect x="488.28" y="220.6" width="1" height="1" fill="#464646"/><rect x="502.86" y="220.6" width="1" height="1" fill="#464646"/><rect x="517.44" y="220.6" width="1" height="1" fill="#464646"/><rect x="532.02" y="220.6" width="1" height="1" fill="#464646"/><rect x="546.60" y="220.6" width="1" height="1" fill="#464646"/><rect x="561.18" y="220.6" width="1" height="1" fill="#464646"/><rect x="575.76" y="220.6" width="1" height="1" fill="#464646"/><rect x="590.34" y="220.6" width="1" height="1" fill="#464646"/><rect x="604.92" y="220.6" width="1" height="1" fill="#464646"/><rect x="619.50" y="220.6" width="1" height="1" fill="#464646"/><rect x="634.08" y="220.6" width="1" height="1" fill="#464646"/><rect x="648.66" y="220.6" width="1" height="1" fill="#464646"/><rect x="663.24" y="220.6" width="1" height="1" fill="#464646"/><rect x="677.82" y="220.6" width="1" height="1" fill="#464646"/><rect x="692.40" y="220.6" width="1" height="1" fill="#464646"/><rect x="706.98" y="220.6" width="1" height="1" fill="#464646"/><rect x="721.56" y="220.6" width="1" height="1" fill="#464646"/><line x1="18" y1="207.3" x2="729" y2="207.3" stroke="#8a8a8a" stroke-width="1" stroke-dasharray="2 3"/><line x1="18" y1="308.6" x2="729" y2="308.6" stroke="#8a8a8a" stroke-width="1" stroke-dasharray="2 3"/><defs><linearGradient id="yg2" gradientUnits="userSpaceOnUse" x1="0" y1="30" x2="0" y2="113"><stop offset="0" stop-color="#d4c000"/><stop offset="0.15" stop-color="#aa9c00"/><stop offset="0.85" stop-color="#9a8c00"/><stop offset="1" stop-color="#c0ae00"/></linearGradient><clipPath id="pc"><rect x="1" y="23" width="728" height="390"/></clipPath></defs><g clip-path="url(#pc)"><rect x="1" y="34" width="728" height="75" fill="#221f00"/><polyline fill="none" stroke="url(#yg2)" stroke-width="0.75" points="1.00,112.8 2.84,30.5 4.68,112.8 6.52,30.7 8.36,113.5 10.20,31.3 12.04,112.4 13.88,30.0 15.72,113.3 17.56,30.5 19.40,112.9 21.24,32.0 23.08,112.9 24.92,31.7 26.76,113.4 28.60,31.3 30.44,112.4 32.28,31.3 34.12,112.6 35.96,31.0 37.80,113.5 39.64,31.3 41.48,112.8 43.32,31.5 45.16,113.6 47.00,30.6 48.84,112.9 50.68,31.7 52.52,112.4 54.36,31.4 56.20,112.3 58.04,31.4 59.88,112.5 61.72,30.8 63.56,112.3 65.40,30.9 67.24,113.5 69.08,31.8 70.92,113.3 72.76,30.3 74.60,113.0 76.44,31.9 78.28,113.2 80.12,31.3 81.96,113.1 83.80,31.0 85.64,112.8 87.48,30.7 89.32,112.3 91.16,31.2 93.00,112.3 94.84,31.4 96.68,112.2 98.52,31.7 100.36,113.4 102.20,31.3 104.04,112.2 105.88,31.7 107.72,112.8 109.56,31.8 111.40,113.3 113.24,31.4 115.08,112.8 116.92,31.7 118.76,113.5 120.60,30.6 122.44,112.2 124.28,31.7 126.12,112.5 127.96,30.2 129.80,113.4 131.64,30.8 133.48,112.5 135.32,30.6 137.16,113.5 139.00,31.7 140.84,113.5 142.68,31.2 144.52,113.1 146.36,31.4 148.20,112.2 150.04,31.8 151.88,112.2 153.72,31.0 155.56,113.5 157.40,30.6 159.24,113.6 161.08,31.2 162.92,113.0 164.76,30.4 166.60,113.4 168.44,31.2 170.28,112.4 172.12,30.1 173.96,112.3 175.80,30.6 177.64,113.1 179.48,31.8 181.32,112.9 183.16,30.9 185.00,112.8 186.84,31.3 188.68,112.7 190.52,31.1 192.36,112.9 194.20,31.9 196.04,112.6 197.88,30.9 199.72,113.2 201.56,30.5 203.40,112.9 205.24,32.0 207.08,113.6 208.92,31.1 210.76,112.8 212.60,30.8 214.44,112.7 216.28,30.0 218.12,113.5 219.96,31.3 221.80,112.9 223.64,31.3 225.48,113.1 227.32,31.4 229.16,112.6 231.00,31.4 232.84,113.5 234.68,30.0 236.52,112.3 238.36,31.4 240.20,113.0 242.04,30.5 243.88,113.2 245.72,31.2 247.56,113.2 249.40,30.7 251.24,112.8 253.08,30.7 254.92,113.1 256.76,30.6 258.60,113.6 260.44,31.5 262.28,112.6 264.12,31.1 265.96,113.3 267.80,30.6 269.64,113.3 271.48,31.6 273.32,113.0 275.16,30.4 277.00,113.5 278.84,31.4 280.68,113.1 282.52,30.6 284.36,113.0 286.20,31.7 288.04,113.4 289.88,31.7 291.72,112.7 293.56,30.7 295.40,113.0 297.24,31.8 299.08,113.4 300.92,30.5 302.76,113.3 304.60,31.1 306.44,112.4 308.28,31.6 310.12,113.2 311.96,30.4 313.80,112.7 315.64,31.6 317.48,113.1 319.32,31.6 321.16,113.2 323.00,30.3 324.84,113.2 326.68,31.6 328.52,113.0 330.36,30.7 332.20,113.0 334.04,30.8 335.88,113.4 337.72,31.8 339.56,112.3 341.40,30.0 343.24,112.2 345.08,31.8 346.92,112.3 348.76,30.9 350.60,113.3 352.44,31.9 354.28,112.4 356.12,31.5 357.96,112.9 359.80,31.3 361.64,113.1 363.48,30.6 365.32,113.5 367.16,30.5 369.00,113.2 370.84,31.2 372.68,113.5 374.52,31.6 376.36,112.6 378.20,31.8 380.04,112.3 381.88,31.8 383.72,112.8 385.56,31.8 387.40,112.6 389.24,30.0 391.08,113.2 392.92,30.3 394.76,112.9 396.60,31.3 398.44,112.3 400.28,30.8 402.12,113.1 403.96,31.2 405.80,112.4 407.64,30.5 409.48,112.5 411.32,31.0 413.16,113.3 415.00,30.7 416.84,112.5 418.68,31.1 420.52,112.5 422.36,30.3 424.20,112.5 426.04,31.8 427.88,113.6 429.72,31.6 431.56,112.4 433.40,31.3 435.24,113.2 437.08,30.1 438.92,112.9 440.76,30.5 442.60,112.9 444.44,30.8 446.28,113.6 448.12,31.6 449.96,113.4 451.80,30.1 453.64,113.5 455.48,30.2 457.32,112.4 459.16,31.9 461.00,112.9 462.84,30.2 464.68,113.2 466.52,30.6 468.36,112.7 470.20,30.7 472.04,113.1 473.88,31.2 475.72,113.1 477.56,30.4 479.40,112.8 481.24,30.2 483.08,113.1 484.92,31.4 486.76,113.4 488.60,30.2 490.44,112.8 492.28,30.7 494.12,113.1 495.96,31.6 497.80,112.7 499.64,31.6 501.48,113.1 503.32,30.9 505.16,112.6 507.00,31.0 508.84,112.6 510.68,30.8 512.52,113.3 514.36,30.9 516.20,112.6 518.04,31.1 519.88,113.0 521.72,30.1 523.56,112.4 525.40,30.9 527.24,113.1 529.08,31.9 530.92,112.5 532.76,31.8 534.60,113.0 536.44,30.5 538.28,112.5 540.12,30.2 541.96,112.4 543.80,31.3 545.64,112.7 547.48,31.6 549.32,112.8 551.16,31.5 553.00,112.8 554.84,30.2 556.68,113.4 558.52,30.0 560.36,113.5 562.20,31.5 564.04,113.5 565.88,30.2 567.72,113.3 569.56,31.8 571.40,112.4 573.24,30.0 575.08,112.4 576.92,30.2 578.76,112.4 580.60,31.3 582.44,112.8 584.28,31.9 586.12,113.5 587.96,31.6 589.80,112.9 591.64,31.5 593.48,113.5 595.32,31.4 597.16,112.3 599.00,31.5 600.84,113.1 602.68,30.1 604.52,112.4 606.36,31.1 608.20,113.3 610.04,30.5 611.88,112.7 613.72,30.5 615.56,113.0 617.40,31.5 619.24,113.0 621.08,30.7 622.92,113.0 624.76,30.7 626.60,112.9 628.44,30.2 630.28,113.0 632.12,31.9 633.96,113.4 635.80,31.5 637.64,112.5 639.48,31.4 641.32,112.9 643.16,31.3 645.00,112.7 646.84,31.0 648.68,113.4 650.52,31.8 652.36,112.6 654.20,30.2 656.04,112.9 657.88,31.8 659.72,112.6 661.56,30.9 663.40,113.2 665.24,30.4 667.08,112.8 668.92,30.4 670.76,113.3 672.60,30.6 674.44,112.3 676.28,31.4 678.12,112.6 679.96,30.6 681.80,112.4 683.64,30.8 685.48,113.2 687.32,31.2 689.16,113.6 691.00,30.4 692.84,113.1 694.68,31.0 696.52,113.1 698.36,30.3 700.20,112.5 702.04,30.6 703.88,112.2 705.72,30.3 707.56,112.8 709.40,31.0 711.24,112.4 713.08,30.9 714.92,112.8 716.76,31.6 718.60,112.6 720.44,31.0 722.28,113.0 724.12,31.7 725.96,112.3 727.80,31.5 729.64,113.3 731.48,30.9"/></g><line x1="18" y1="107.5" x2="729" y2="107.5" stroke="#8a8a8a" stroke-width="0.8" stroke-dasharray="1.5 2.5" opacity="0.8"/><polyline fill="none" stroke="#26a4b0" stroke-width="0.95" points="1.0,206.79 2.0,206.05 3.0,205.64 4.0,206.50 5.0,206.68 6.0,205.78 7.0,205.83 8.0,206.72 9.0,206.44 10.0,205.62 11.0,206.11 12.0,206.80 13.0,206.13 14.0,205.62 15.0,206.42 16.0,206.73 17.0,205.85 18.0,205.76 19.0,206.66 20.0,206.52 21.0,205.65 22.0,206.02 23.0,206.79 24.0,206.22 25.0,205.60 26.0,206.33 27.0,206.76 28.0,205.93 29.0,205.71 30.0,206.60 31.0,206.59 32.0,205.70 33.0,205.94 34.0,206.77 35.0,206.31 36.0,205.60 37.0,206.24 38.0,206.79 39.0,206.01 40.0,205.66 41.0,206.53 42.0,206.65 43.0,205.75 44.0,205.86 45.0,206.74 46.0,206.40 47.0,205.61 48.0,206.15 49.0,206.80 50.0,206.09 51.0,205.63 52.0,206.45 53.0,206.71 54.0,205.82 55.0,205.79 56.0,206.69 57.0,206.48 58.0,205.64 59.0,206.06 60.0,206.80 61.0,206.18 62.0,205.61 63.0,206.37 64.0,206.75 65.0,205.89 66.0,205.73 67.0,206.63 68.0,206.56 69.0,205.68 70.0,205.98 71.0,206.78 72.0,206.27 73.0,205.60 74.0,206.28 75.0,206.78 76.0,205.97 77.0,205.68 78.0,206.56 79.0,206.63 80.0,205.73 81.0,205.90 82.0,206.75 83.0,206.36 84.0,205.61 85.0,206.19 86.0,206.80 87.0,206.05 88.0,205.64 89.0,206.49 90.0,206.68 91.0,205.79 92.0,205.82 93.0,206.71 94.0,206.45 95.0,205.63 96.0,206.10 97.0,206.80 98.0,206.14 99.0,205.62 100.0,206.41 101.0,206.73 102.0,205.86 103.0,205.76 104.0,206.66 105.0,206.52 106.0,205.66 107.0,206.02 108.0,206.79 109.0,206.23 110.0,205.60 111.0,206.32 112.0,206.77 113.0,205.93 114.0,205.70 115.0,206.60 116.0,206.60 117.0,205.70 118.0,205.93 119.0,206.77 120.0,206.32 121.0,205.60 122.0,206.23 123.0,206.79 124.0,206.02 125.0,205.66 126.0,206.52 127.0,206.66 128.0,205.76 129.0,205.86 130.0,206.73 131.0,206.41 132.0,205.61 133.0,206.14 134.0,206.80 135.0,206.10 136.0,205.63 137.0,206.45 138.0,206.71 139.0,205.82 140.0,205.79 141.0,206.68 142.0,206.49 143.0,205.64 144.0,206.05 145.0,206.80 146.0,206.19 147.0,205.61 148.0,206.36 149.0,206.75 150.0,205.90 151.0,205.73 152.0,206.63 153.0,206.56 154.0,205.68 155.0,205.97 156.0,206.78 157.0,206.28 158.0,205.60 159.0,206.27 160.0,206.78 161.0,205.98 162.0,205.68 163.0,206.56 164.0,206.63 165.0,205.73 166.0,205.89 167.0,206.75 168.0,206.37 169.0,205.61 170.0,206.18 171.0,206.80 172.0,206.06 173.0,205.64 174.0,206.48 175.0,206.69 176.0,205.79 177.0,205.82 178.0,206.71 179.0,206.45 180.0,205.63 181.0,206.09 182.0,206.80 183.0,206.15 184.0,205.61 185.0,206.40 186.0,206.73 187.0,205.86 188.0,205.75 189.0,206.65 190.0,206.53 191.0,205.66 192.0,206.01 193.0,206.79 194.0,206.24 195.0,205.60 196.0,206.31 197.0,206.77 198.0,205.94 199.0,205.70 200.0,206.59 201.0,206.60 202.0,205.71 203.0,205.93 204.0,206.76 205.0,206.33 206.0,205.60 207.0,206.22 208.0,206.79 209.0,206.02 210.0,205.65 211.0,206.52 212.0,206.66 213.0,205.76 214.0,205.85 215.0,206.73 216.0,206.41 217.0,205.62 218.0,206.14 219.0,206.80 220.0,206.11 221.0,205.62 222.0,206.44 223.0,206.72 224.0,205.83 225.0,205.78 226.0,206.68 227.0,206.50 228.0,205.64 229.0,206.05 230.0,206.80 231.0,206.20 232.0,205.61 233.0,206.35 234.0,206.76 235.0,205.90 236.0,205.72 237.0,206.62 238.0,206.57 239.0,205.68 240.0,205.96 241.0,206.78 242.0,206.29 243.0,205.60 244.0,206.27 245.0,206.78 246.0,205.98 247.0,205.67 248.0,206.55 249.0,206.64 250.0,205.74 251.0,205.88 252.0,206.75 253.0,206.38 254.0,205.61 255.0,206.18 256.0,206.80 257.0,206.07 257.5,206.20 258.1,123.8 258.9,130.8 258.9,130.98 259.9,131.34 260.9,130.48 261.9,130.34 262.9,131.24 263.9,131.15 264.9,130.27 265.9,130.59 266.9,131.38 267.9,130.86 268.9,130.20 269.9,130.89 270.9,131.38 271.9,130.56 272.9,130.29 273.9,131.17 274.9,131.22 275.5,130.80 276.3,210.2 276.9,206.2 276.9,205.91 277.9,206.76 278.9,206.35 279.9,205.60 280.9,206.20 281.9,206.79 282.9,206.04 283.9,205.65 284.9,206.50 285.9,206.68 286.9,205.78 287.9,205.83 288.9,206.72 289.9,206.43 290.9,205.62 291.9,206.12 292.9,206.80 293.9,206.13 294.9,205.62 295.9,206.42 296.9,206.73 297.9,205.84 298.9,205.77 299.9,206.67 300.9,206.51 301.9,205.65 302.9,206.03 303.9,206.79 304.9,206.22 305.9,205.60 306.9,206.33 307.9,206.76 308.9,205.92 309.9,205.71 310.9,206.61 311.9,206.59 312.0,206.20 312.6,123.8 313.4,130.8 313.4,130.22 314.4,131.04 315.4,131.32 315.5,130.80 316.3,210.2 316.9,206.2 316.9,205.60 317.9,206.25 318.9,206.79 319.9,206.00 320.9,205.66 321.9,206.54 322.8,206.20 323.4,123.8 324.2,130.8 324.2,130.21 325.2,130.75 326.2,131.40 327.0,130.80 327.8,210.2 328.4,206.2 328.4,205.72 329.4,206.62 330.4,206.57 331.4,205.68 332.4,205.96 333.4,206.78 334.0,206.20 334.6,123.8 335.4,130.8 335.4,130.20 336.4,130.87 337.4,131.38 338.4,130.58 339.4,130.27 340.4,131.15 341.4,131.24 342.0,130.80 342.8,210.2 343.4,206.2 343.4,205.88 344.4,206.75 345.4,206.38 346.4,205.61 347.4,206.18 348.4,206.80 349.4,206.07 350.4,205.64 351.4,206.48 352.4,206.69 353.4,205.80 354.4,205.81 355.4,206.70 356.4,206.46 357.4,205.63 358.4,206.09 359.4,206.80 360.4,206.16 361.4,205.61 362.4,206.39 363.4,206.74 364.4,205.87 365.4,205.75 366.4,206.65 367.4,206.54 368.4,205.66 369.4,206.00 370.4,206.79 371.4,206.25 372.4,205.60 373.4,206.31 374.4,206.77 375.4,205.95 376.4,205.69 377.4,206.58 378.4,206.61 379.4,205.71 380.4,205.92 381.4,206.76 382.4,206.34 383.4,205.60 384.4,206.22 385.4,206.79 386.4,206.03 387.4,205.65 388.4,206.51 389.4,206.67 390.4,205.77 391.4,205.84 392.4,206.72 393.4,206.42 394.4,205.62 395.4,206.13 396.4,206.80 397.4,206.12 398.4,205.62 399.4,206.43 400.4,206.72 401.4,205.83 402.4,205.77 403.4,206.67 404.4,206.50 405.4,205.65 406.4,206.04 407.4,206.79 408.4,206.21 409.4,205.60 410.4,206.35 410.5,206.20 411.1,123.8 411.9,130.8 411.9,131.00 412.9,130.21 413.9,130.75 414.0,130.80 414.8,210.2 415.4,206.2 415.4,206.58 416.4,205.69 417.4,205.96 418.4,206.77 419.4,206.30 420.4,205.60 421.4,206.26 422.4,206.78 423.4,205.99 424.4,205.67 425.4,206.55 426.4,206.64 427.4,205.74 428.4,205.88 429.4,206.74 430.4,206.38 431.4,205.61 432.4,206.17 433.4,206.80 434.4,206.08 435.4,205.63 436.4,206.47 437.4,206.70 438.4,205.80 439.4,205.80 440.4,206.70 441.4,206.47 442.4,205.63 443.4,206.08 443.5,206.20 444.1,123.8 444.9,130.8 444.9,131.23 445.9,130.33 446.8,130.80 447.6,210.2 448.2,206.2 448.2,206.80 449.2,206.06 450.2,205.64 451.2,206.48 452.2,206.69 453.2,205.79 454.2,205.82 455.2,206.71 456.2,206.45 457.2,205.63 458.2,206.10 459.2,206.80 460.2,206.15 461.2,205.61 462.2,206.40 463.2,206.73 464.2,205.86 465.2,205.75 466.2,206.65 467.2,206.53 468.2,205.66 469.2,206.01 470.2,206.79 471.2,206.24 472.2,205.60 472.5,206.20 473.1,123.8 473.9,130.8 473.9,131.39 474.9,130.84 475.9,130.20 476.9,130.92 477.9,131.37 478.9,130.53 479.9,130.30 480.0,130.80 480.8,210.2 481.4,206.2 481.4,206.80 482.4,206.13 483.4,205.62 484.4,206.42 485.4,206.72 486.4,205.84 487.4,205.77 488.4,206.67 489.4,206.51 490.4,205.65 490.5,206.20 491.1,123.8 491.9,130.8 491.9,131.12 492.9,131.26 493.9,130.36 494.2,130.80 495.0,210.2 495.6,206.2 495.6,206.53 496.6,206.66 497.6,205.76 498.6,205.86 499.6,206.73 500.6,206.41 501.6,205.61 502.0,206.20 502.6,123.8 503.4,130.8 503.4,131.37 504.4,130.90 505.4,130.20 506.4,130.85 507.4,131.39 508.4,130.60 509.4,130.27 510.4,131.14 511.4,131.25 512.4,130.35 513.4,130.47 514.4,131.34 515.4,130.99 515.8,130.80 516.6,210.2 517.2,206.2 517.2,205.96 518.2,206.78 519.2,206.29 520.0,206.20 520.6,123.8 521.4,130.8 521.4,131.06 522.4,131.30 523.4,130.41 523.8,130.80 524.6,210.2 525.2,206.2 525.2,206.55 526.2,206.64 527.2,205.74 528.2,205.88 529.2,206.75 530.2,206.38 531.2,205.61 532.2,206.18 533.2,206.80 534.2,206.07 535.2,205.64 536.2,206.48 537.2,206.69 538.2,205.80 539.2,205.81 540.2,206.70 541.2,206.46 542.2,205.63 543.2,206.09 544.2,206.80 545.2,206.16 546.2,205.61 547.2,206.39 548.2,206.74 549.2,205.87 550.2,205.75 551.2,206.65 552.2,206.54 553.2,205.66 554.2,206.00 555.2,206.79 556.2,206.25 557.2,205.60 558.2,206.31 559.2,206.77 560.2,205.95 561.2,205.69 562.2,206.58 563.2,206.61 564.2,205.71 565.2,205.92 566.2,206.76 567.2,206.34 568.2,205.60 569.2,206.22 570.2,206.79 571.2,206.03 572.2,205.65 573.2,206.51 574.2,206.67 575.2,205.77 576.2,205.84 577.2,206.72 578.2,206.42 579.2,205.62 580.2,206.13 581.2,206.80 582.2,206.12 583.2,205.62 584.2,206.43 585.2,206.72 586.2,205.83 587.2,205.78 588.2,206.68 589.2,206.50 590.2,205.65 591.2,206.04 592.2,206.79 593.2,206.21 594.2,205.60 595.2,206.35 596.2,206.76 597.2,205.91 598.2,205.72 599.2,206.62 600.2,206.58 601.2,205.69 602.2,205.96 603.2,206.77 604.2,206.30 605.2,205.60 606.2,206.26 607.2,206.78 608.2,205.99 609.2,205.67 610.2,206.55 611.2,206.64 612.2,205.74 613.2,205.88 614.2,206.74 615.2,206.38 616.2,205.61 617.2,206.17 618.2,206.80 619.2,206.08 620.2,205.63 621.2,206.47 622.2,206.70 623.2,205.80 624.2,205.81 625.2,206.70 626.2,206.47 627.2,205.63 628.2,206.08 629.2,206.80 630.2,206.17 631.2,205.61 632.2,206.39 633.2,206.74 634.2,205.87 635.2,205.74 636.2,206.64 637.2,206.54 638.2,205.67 639.2,205.99 640.2,206.79 641.2,206.26 642.2,205.60 643.2,206.30 644.2,206.77 645.2,205.95 646.2,205.69 647.2,206.58 648.2,206.61 649.2,205.72 650.2,205.91 651.2,206.76 652.2,206.34 653.2,205.60 654.2,206.21 655.2,206.79 656.2,206.04 657.2,205.65 658.2,206.50 659.2,206.67 660.2,205.77 661.2,205.84 662.2,206.72 663.2,206.43 664.2,205.62 665.2,206.12 666.2,206.80 667.2,206.13 668.2,205.62 669.2,206.42 670.2,206.72 671.2,205.84 672.2,205.77 673.2,206.67 674.2,206.51 675.2,205.65 676.2,206.03 677.2,206.79 678.2,206.21 679.2,205.60 680.2,206.34 681.2,206.76 682.2,205.92 683.2,205.71 684.2,206.61 685.2,206.58 686.2,205.69 687.2,205.95 688.2,206.77 689.2,206.30 690.2,205.60 691.2,206.25 692.2,206.79 693.2,206.00 694.2,205.67 695.2,206.54 696.2,206.65 697.2,205.75 698.2,205.87 699.2,206.74 700.2,206.39 701.2,205.61 702.2,206.16 703.2,206.80 704.2,206.08 705.2,205.63 706.2,206.46 707.2,206.70 708.2,205.81 709.2,205.80 710.2,206.69 711.2,206.47 712.2,205.64 713.2,206.07 714.2,206.80 715.2,206.17 716.2,205.61 717.2,206.38 718.2,206.75 719.2,205.88 720.2,205.74 721.2,206.64 722.2,206.55 723.2,205.67 724.2,205.99 725.2,206.78 726.2,206.26 727.2,205.60 728.2,206.29 729.0,206.20"/><polyline fill="none" stroke="#c01e38" stroke-width="0.95" points="1.0,229.49 2.0,228.75 3.0,228.34 4.0,229.20 5.0,229.38 6.0,228.48 7.0,228.53 8.0,229.42 9.0,229.14 10.0,228.32 11.0,228.81 12.0,229.50 13.0,228.83 14.0,228.32 15.0,229.12 16.0,229.43 17.0,228.55 18.0,228.46 19.0,229.36 20.0,229.22 21.0,228.35 22.0,228.72 23.0,229.49 24.0,228.92 25.0,228.30 26.0,229.03 27.0,229.46 28.0,228.63 29.0,228.41 30.0,229.30 31.0,229.29 32.0,228.40 33.0,228.64 34.0,229.47 35.0,229.01 36.0,228.30 37.0,228.94 38.0,229.49 39.0,228.71 40.0,228.36 41.0,229.23 42.0,229.35 43.0,228.45 44.0,228.56 45.0,229.44 46.0,229.10 47.0,228.31 48.0,228.85 49.0,229.50 50.0,228.79 51.0,228.33 52.0,229.15 53.0,229.41 54.0,228.52 55.0,228.49 56.0,229.39 57.0,229.18 58.0,228.34 59.0,228.76 60.0,229.50 61.0,228.88 62.0,228.31 63.0,229.07 64.0,229.45 65.0,228.59 66.0,228.43 67.0,229.33 68.0,229.26 69.0,228.38 70.0,228.68 71.0,229.48 72.0,228.97 73.0,228.30 74.0,228.98 75.0,229.48 76.0,228.67 77.0,228.38 78.0,229.26 79.0,229.33 80.0,228.43 81.0,228.60 82.0,229.45 83.0,229.06 84.0,228.31 85.0,228.89 86.0,229.50 87.0,228.75 88.0,228.34 89.0,229.19 90.0,229.38 91.0,228.49 92.0,228.52 93.0,229.41 94.0,229.15 95.0,228.33 96.0,228.80 97.0,229.50 98.0,228.84 99.0,228.32 100.0,229.11 101.0,229.43 102.0,228.56 103.0,228.46 104.0,229.36 105.0,229.22 106.0,228.36 107.0,228.72 108.0,229.49 109.0,228.93 110.0,228.30 111.0,229.02 112.0,229.47 113.0,228.63 114.0,228.40 115.0,229.30 116.0,229.30 117.0,228.40 118.0,228.63 119.0,229.47 120.0,229.02 121.0,228.30 122.0,228.93 123.0,229.49 124.0,228.72 125.0,228.36 126.0,229.22 127.0,229.36 128.0,228.46 129.0,228.56 130.0,229.43 131.0,229.11 132.0,228.31 133.0,228.84 134.0,229.50 135.0,228.80 136.0,228.33 137.0,229.15 138.0,229.41 139.0,228.52 140.0,228.49 141.0,229.38 142.0,229.19 143.0,228.34 144.0,228.75 145.0,229.50 146.0,228.89 147.0,228.31 148.0,229.06 149.0,229.45 150.0,228.60 151.0,228.43 152.0,229.33 153.0,229.26 154.0,228.38 155.0,228.67 156.0,229.48 157.0,228.98 158.0,228.30 159.0,228.97 160.0,229.48 161.0,228.68 162.0,228.38 163.0,229.26 164.0,229.33 165.0,228.43 166.0,228.59 167.0,229.45 168.0,229.07 169.0,228.31 170.0,228.88 171.0,229.50 172.0,228.76 173.0,228.34 174.0,229.18 175.0,229.39 176.0,228.49 177.0,228.52 178.0,229.41 179.0,229.15 180.0,228.33 181.0,228.79 182.0,229.50 183.0,228.85 184.0,228.31 185.0,229.10 186.0,229.43 187.0,228.56 188.0,228.45 189.0,229.35 190.0,229.23 191.0,228.36 192.0,228.71 193.0,229.49 194.0,228.94 195.0,228.30 196.0,229.01 197.0,229.47 198.0,228.64 199.0,228.40 200.0,229.29 201.0,229.30 202.0,228.41 203.0,228.63 204.0,229.46 205.0,229.03 206.0,228.30 207.0,228.92 208.0,229.49 209.0,228.72 210.0,228.35 211.0,229.22 212.0,229.36 213.0,228.46 214.0,228.55 215.0,229.43 216.0,229.11 217.0,228.32 218.0,228.84 219.0,229.50 220.0,228.81 221.0,228.32 222.0,229.14 223.0,229.42 224.0,228.53 225.0,228.48 226.0,229.38 227.0,229.20 228.0,228.34 229.0,228.75 230.0,229.50 231.0,228.90 232.0,228.31 233.0,229.05 234.0,229.46 235.0,228.60 236.0,228.42 237.0,229.32 238.0,229.27 239.0,228.38 240.0,228.66 241.0,229.48 242.0,228.99 243.0,228.30 244.0,228.97 245.0,229.48 246.0,228.68 247.0,228.37 248.0,229.25 249.0,229.34 250.0,228.44 251.0,228.58 252.0,229.45 253.0,229.08 254.0,228.90 254.8,309.3 255.4,305.3 255.4,305.66 256.4,305.73 257.4,304.83 258.4,304.99 259.4,305.85 260.4,305.47 261.4,304.71 262.4,305.28 263.4,305.90 264.4,305.16 265.4,304.74 266.4,305.58 267.4,305.79 268.4,304.89 269.4,304.92 270.4,305.81 271.4,305.55 272.4,304.73 273.4,305.20 274.4,305.90 275.4,305.25 276.4,304.71 277.4,305.50 278.4,305.83 279.4,304.96 280.4,304.85 281.4,305.75 282.4,305.63 283.4,304.76 284.4,305.11 285.4,305.89 286.4,305.34 287.4,304.70 288.4,305.41 289.4,305.87 290.4,305.04 291.4,304.80 292.4,305.69 293.4,305.70 294.4,304.81 295.4,305.03 296.4,305.86 297.4,305.43 298.4,304.70 299.4,305.33 300.4,305.89 301.4,305.12 302.4,304.75 303.4,305.62 304.4,305.76 305.4,304.86 306.4,304.95 307.4,305.83 308.4,305.51 309.4,304.72 310.4,305.24 311.4,305.90 312.4,305.21 313.4,304.72 314.4,305.54 315.4,305.82 316.4,304.93 317.4,304.88 318.4,305.78 319.4,305.60 320.4,304.74 321.4,305.15 322.4,305.90 323.4,305.30 324.4,304.71 325.4,305.45 326.4,305.86 327.4,305.00 328.4,304.82 329.4,305.72 330.4,305.67 331.4,304.78 332.4,305.06 333.4,305.88 334.4,305.39 335.4,304.70 336.4,305.37 337.4,305.88 338.4,305.08 339.4,304.77 340.4,305.65 341.3,305.30 341.9,221.9 342.7,228.9 342.7,228.31 343.7,228.87 344.7,229.50 344.8,228.90 345.6,309.3 346.2,305.3 346.2,304.78 347.2,305.08 348.2,305.88 349.2,305.37 350.2,304.70 351.2,305.38 352.2,305.88 353.2,305.07 354.2,304.78 355.2,305.67 356.2,305.73 357.2,304.83 358.2,305.00 359.2,305.85 360.2,305.46 361.2,304.71 362.2,305.29 363.2,305.90 364.2,305.15 365.2,304.74 366.2,305.59 367.2,305.78 368.2,304.89 369.2,304.92 370.2,305.81 371.2,305.54 372.2,304.73 373.2,305.20 374.2,305.90 375.2,305.24 376.2,304.72 377.2,305.51 378.2,305.83 379.2,304.95 380.2,304.86 381.2,305.76 382.2,305.62 383.2,304.76 384.2,305.12 385.2,305.89 386.2,305.33 387.2,304.70 388.2,305.42 389.2,305.87 390.2,305.03 391.2,304.80 392.2,305.70 393.2,305.70 394.2,304.80 395.2,305.03 396.2,305.87 397.2,305.42 398.2,304.70 399.2,305.33 400.2,305.89 401.2,305.11 402.2,304.76 403.2,305.63 404.2,305.76 405.2,304.86 406.2,304.96 407.2,305.83 408.2,305.51 409.2,304.71 410.2,305.24 411.2,305.90 412.2,305.20 413.2,304.73 414.2,305.55 415.2,305.81 416.2,304.92 417.2,304.89 418.2,305.78 419.2,305.59 420.2,304.74 421.2,305.16 422.2,305.90 423.2,305.29 424.2,304.71 425.2,305.46 426.2,305.85 427.2,305.00 428.2,304.83 429.2,305.73 430.2,305.66 431.2,304.78 432.2,305.07 432.3,305.30 432.9,221.9 433.7,228.9 433.7,229.40 434.7,228.51 435.7,228.50 436.0,228.90 436.8,309.3 437.4,305.3 437.4,305.80 438.4,304.90 439.4,304.90 440.4,305.80 441.4,305.57 442.4,304.73 443.4,305.18 444.4,305.90 445.4,305.27 446.4,304.71 447.4,305.49 448.4,305.84 449.4,304.97 450.4,304.84 451.4,305.74 452.4,305.64 453.4,304.77 454.4,305.09 455.4,305.89 456.4,305.36 457.4,304.70 458.4,305.40 459.4,305.87 460.4,305.05 461.4,304.79 462.4,305.68 463.4,305.71 464.4,304.82 465.4,305.01 466.4,305.86 467.4,305.44 468.4,304.70 469.4,305.31 470.4,305.89 471.4,305.14 472.4,304.75 473.4,305.60 474.4,305.77 475.4,304.87 476.4,304.94 477.4,305.82 478.4,305.53 479.4,304.72 480.4,305.22 481.4,305.90 482.4,305.23 483.4,304.72 484.4,305.52 485.4,305.82 486.4,304.94 487.4,304.87 488.4,305.77 489.4,305.61 490.4,304.75 491.4,305.13 492.4,305.89 493.4,305.32 494.4,304.70 495.4,305.44 496.4,305.86 497.4,305.02 498.4,304.81 499.4,305.71 500.4,305.68 501.4,304.79 502.4,305.05 503.4,305.87 504.4,305.40 505.4,304.70 506.4,305.35 507.4,305.89 508.4,305.10 509.4,304.77 510.4,305.64 511.4,305.75 512.4,304.85 513.4,304.97 514.4,305.84 515.4,305.49 516.4,304.71 517.4,305.26 518.4,305.90 519.4,305.19 520.4,304.73 521.4,305.56 522.4,305.80 523.3,305.30 523.9,221.9 524.7,228.9 525.5,230.40 525.5,230.94 526.5,230.58 527.5,229.81 528.5,230.37 529.5,231.00 530.5,230.27 531.5,229.83 532.5,230.67 533.5,230.90 534.5,230.00 535.5,230.01 536.5,230.90 537.5,230.66 538.5,229.83 539.5,230.28 540.5,231.00 541.5,230.36 542.5,229.81 543.5,230.59 544.5,230.94 545.5,230.07 546.5,229.94 547.5,230.85 548.5,230.74 549.5,229.87 550.5,230.20 551.5,230.99 552.5,230.45 553.5,229.80 554.5,230.50 555.5,230.97 556.5,230.15 557.5,229.89 558.5,230.78 559.5,230.81 560.5,229.91 561.5,230.12 562.5,230.96 563.5,230.54 564.5,229.80 565.5,230.41 566.5,230.99 567.5,230.23 568.5,229.85 569.5,230.71 570.5,230.87 571.5,229.97 572.5,230.04 573.5,230.92 574.5,230.63 575.5,229.82 576.5,230.32 577.5,231.00 578.5,230.32 579.5,229.82 580.5,230.63 581.5,230.92 582.5,230.04 583.5,229.97 584.5,230.87 585.5,230.71 586.5,229.85 587.5,230.24 588.5,230.99 589.5,230.41 590.5,229.80 591.5,230.54 592.5,230.96 593.5,230.11 594.5,229.91 595.5,230.81 596.5,230.78 597.5,229.89 598.5,230.15 599.5,230.97 600.5,230.50 601.5,229.80 602.5,230.45 603.5,230.99 604.5,230.19 605.5,229.87 606.5,230.74 607.5,230.84 608.5,229.94 609.5,230.07 610.5,230.94 611.5,230.59 612.5,229.81 613.5,230.36 614.5,231.00 615.5,230.28 616.5,229.83 617.5,230.67 618.5,230.90 619.5,230.01 620.5,230.00 621.5,230.90 622.5,230.67 623.5,229.83 624.5,230.28 625.5,231.00 626.5,230.37 627.5,229.81 628.5,230.58 629.5,230.94 630.5,230.08 631.5,229.94 632.5,230.84 633.5,230.75 634.5,229.87 635.5,230.19 636.5,230.98 637.5,230.46 638.5,229.80 639.5,230.49 640.5,230.98 641.5,230.16 642.5,229.89 643.5,230.78 644.5,230.82 645.5,229.92 646.5,230.11 647.5,230.96 648.5,230.55 649.5,229.80 650.5,230.41 651.5,230.99 652.5,230.24 653.5,229.85 654.5,230.70 655.5,230.88 656.5,229.98 657.5,230.03 658.5,230.92 659.5,230.63 660.5,229.82 661.5,230.32 662.5,231.00 663.5,230.33 664.5,229.82 665.5,230.62 666.5,230.92 667.5,230.04 668.5,229.97 669.5,230.87 670.5,230.71 671.5,229.85 672.5,230.23 673.5,230.99 674.5,230.42 675.5,229.80 676.5,230.54 677.5,230.96 678.5,230.12 679.5,229.91 680.5,230.81 681.5,230.79 682.5,229.89 683.5,230.14 684.5,230.97 685.5,230.51 686.5,229.80 687.5,230.45 688.5,230.99 689.5,230.20 690.5,229.86 691.5,230.74 692.5,230.85 693.5,229.95 694.5,230.07 695.5,230.94 696.5,230.59 697.5,229.81 698.5,230.36 699.5,231.00 700.5,230.29 701.5,229.83 702.5,230.66 703.5,230.90 704.5,230.01 705.5,230.00 706.5,230.89 707.5,230.68 708.5,229.84 709.5,230.27 710.5,231.00 711.5,230.38 712.5,229.81 713.5,230.57 714.5,230.95 715.5,230.08 716.5,229.93 717.5,230.84 718.5,230.75 719.5,229.87 720.5,230.18 721.5,230.98 722.5,230.47 723.5,229.80 724.5,230.49 725.5,230.98 726.5,230.16 727.5,229.88 728.5,230.77 729.0,230.40"/><rect x="18" y="344" width="711" height="2" fill="#e21ee6"/><path d="M259,340.5 H338 Q341.6,345 338,349.5 H259 Q255.4,345 259,340.5 Z" fill="#000" stroke="#1f8a93" stroke-width="1"/><path d="M350.5,340.5 H429 Q432.6,345 429,349.5 H350.5 Q346.9,345 350.5,340.5 Z" fill="#000" stroke="#1f8a93" stroke-width="1"/><path d="M441.5,340.5 H520.5 Q524.1,345 520.5,349.5 H441.5 Q437.9,345 441.5,340.5 Z" fill="#000" stroke="#1f8a93" stroke-width="1"/><line x1="255.5" y1="341" x2="255.5" y2="349" stroke="#3c3" stroke-width="0.8"/><line x1="344.5" y1="341" x2="344.5" y2="349" stroke="#c33" stroke-width="0.8"/><line x1="345.8" y1="341" x2="345.8" y2="349" stroke="#3c3" stroke-width="0.8"/><line x1="435.2" y1="341" x2="435.2" y2="349" stroke="#c33" stroke-width="0.8"/><line x1="436.6" y1="341" x2="436.6" y2="349" stroke="#3c3" stroke-width="0.8"/><path d="M2.00,368.6V357.6M3.85,357.6V368.6M5.65,368.6V357.6M7.50,357.6V368.6M9.30,368.6V357.6M11.15,357.6V368.6M12.96,368.6V357.6M14.81,357.6V368.6M16.61,368.6V357.6M18.46,357.6V368.6M20.26,368.6V357.6M22.11,357.6V368.6M23.91,368.6V357.6M25.76,357.6V368.6M27.57,368.6V357.6M29.42,357.6V368.6M31.22,368.6V357.6M33.07,357.6V368.6M34.87,368.6V357.6M36.72,357.6V368.6M38.52,368.6V357.6M40.37,357.6V368.6M42.18,368.6V357.6M44.03,357.6V368.6M45.83,368.6V357.6M47.68,357.6V368.6M49.48,368.6V357.6M51.33,357.6V368.6M53.13,368.6V357.6M54.98,357.6V368.6M56.79,368.6V357.6M58.64,357.6V368.6M60.44,368.6V357.6M62.29,357.6V368.6M64.09,368.6V357.6M65.94,357.6V368.6M67.74,368.6V357.6M69.59,357.6V368.6M71.40,368.6V357.6M73.25,357.6V368.6M75.05,368.6V357.6M76.90,357.6V368.6M78.70,368.6V357.6M80.55,357.6V368.6M82.35,368.6V357.6M84.20,357.6V368.6M86.01,368.6V357.6M87.86,357.6V368.6M89.66,368.6V357.6M91.51,357.6V368.6M93.31,368.6V357.6M95.16,357.6V368.6M96.96,368.6V357.6M98.81,357.6V368.6M100.61,368.6V357.6M102.46,357.6V368.6M104.27,368.6V357.6M106.12,357.6V368.6M107.92,368.6V357.6M109.77,357.6V368.6M111.57,368.6V357.6M113.42,357.6V368.6M115.22,368.6V357.6M117.07,357.6V368.6M118.88,368.6V357.6M120.73,357.6V368.6M122.53,368.6V357.6M124.38,357.6V368.6M126.18,368.6V357.6M128.03,357.6V368.6M129.83,368.6V357.6M131.68,357.6V368.6M133.49,368.6V357.6M135.34,357.6V368.6M137.14,368.6V357.6M138.99,357.6V368.6M140.79,368.6V357.6M142.64,357.6V368.6M144.44,368.6V357.6M146.29,357.6V368.6M148.10,368.6V357.6M149.95,357.6V368.6M151.75,368.6V357.6M153.60,357.6V368.6M155.40,368.6V357.6M157.25,357.6V368.6M159.05,368.6V357.6M160.90,357.6V368.6M162.71,368.6V357.6M164.56,357.6V368.6M166.36,368.6V357.6M168.21,357.6V368.6M170.01,368.6V357.6M171.86,357.6V368.6M173.66,368.6V357.6M175.51,357.6V368.6M177.32,368.6V357.6M179.17,357.6V368.6M180.97,368.6V357.6M182.82,357.6V368.6M184.62,368.6V357.6M186.47,357.6V368.6M188.27,368.6V357.6M190.12,357.6V368.6M191.92,368.6V357.6M193.77,357.6V368.6M195.58,368.6V357.6M197.43,357.6V368.6M199.23,368.6V357.6M201.08,357.6V368.6M202.88,368.6V357.6M204.73,357.6V368.6M206.53,368.6V357.6M208.38,357.6V368.6M210.19,368.6V357.6M212.04,357.6V368.6M213.84,368.6V357.6M215.69,357.6V368.6M217.49,368.6V357.6M219.34,357.6V368.6M221.14,368.6V357.6M222.99,357.6V368.6M224.80,368.6V357.6M226.65,357.6V368.6M228.45,368.6V357.6M230.30,357.6V368.6M232.10,368.6V357.6M233.95,357.6V368.6M235.75,368.6V357.6M237.60,357.6V368.6M239.41,368.6V357.6M241.26,357.6V368.6M243.06,368.6V357.6M244.91,357.6V368.6M246.71,368.6V357.6M248.56,357.6V368.6M250.36,368.6V357.6M252.21,357.6V368.6M254.02,368.6V357.6M255.87,357.6V368.6M257.67,368.6V357.6M259.52,357.6V368.6M261.32,368.6V357.6M263.17,357.6V368.6M264.97,368.6V357.6M266.82,357.6V368.6M268.63,368.6V357.6M270.48,357.6V368.6M272.28,368.6V357.6M274.13,357.6V368.6M275.93,368.6V357.6M277.78,357.6V368.6M279.58,368.6V357.6M281.43,357.6V368.6M283.23,368.6V357.6M285.08,357.6V368.6M286.89,368.6V357.6M288.74,357.6V368.6M290.54,368.6V357.6M292.39,357.6V368.6M294.19,368.6V357.6M296.04,357.6V368.6M297.84,368.6V357.6M299.69,357.6V368.6M301.50,368.6V357.6M303.35,357.6V368.6M305.15,368.6V357.6M307.00,357.6V368.6M308.80,368.6V357.6M310.65,357.6V368.6M312.45,368.6V357.6M314.30,357.6V368.6M316.11,368.6V357.6M317.96,357.6V368.6M319.76,368.6V357.6M321.61,357.6V368.6M323.41,368.6V357.6M325.26,357.6V368.6M327.06,368.6V357.6M328.91,357.6V368.6M330.72,368.6V357.6M332.57,357.6V368.6M334.37,368.6V357.6M336.22,357.6V368.6M338.02,368.6V357.6M339.87,357.6V368.6M341.67,368.6V357.6M343.52,357.6V368.6M345.33,368.6V357.6M347.18,357.6V368.6M348.98,368.6V357.6M350.83,357.6V368.6M352.63,368.6V357.6M354.48,357.6V368.6M356.28,368.6V357.6M358.13,357.6V368.6M359.94,368.6V357.6M361.79,357.6V368.6M363.59,368.6V357.6M365.44,357.6V368.6M367.24,368.6V357.6M369.09,357.6V368.6M370.89,368.6V357.6M372.74,357.6V368.6M374.54,368.6V357.6M376.39,357.6V368.6M378.20,368.6V357.6M380.05,357.6V368.6M381.85,368.6V357.6M383.70,357.6V368.6M385.50,368.6V357.6M387.35,357.6V368.6M389.15,368.6V357.6M391.00,357.6V368.6M392.81,368.6V357.6M394.66,357.6V368.6M396.46,368.6V357.6M398.31,357.6V368.6M400.11,368.6V357.6M401.96,357.6V368.6M403.76,368.6V357.6M405.61,357.6V368.6M407.42,368.6V357.6M409.27,357.6V368.6M411.07,368.6V357.6M412.92,357.6V368.6M414.72,368.6V357.6M416.57,357.6V368.6M418.37,368.6V357.6M420.22,357.6V368.6M422.03,368.6V357.6M423.88,357.6V368.6M425.68,368.6V357.6M427.53,357.6V368.6M429.33,368.6V357.6M431.18,357.6V368.6M432.98,368.6V357.6M434.83,357.6V368.6M436.64,368.6V357.6M438.49,357.6V368.6M440.29,368.6V357.6M442.14,357.6V368.6M443.94,368.6V357.6M445.79,357.6V368.6M447.59,368.6V357.6M449.44,357.6V368.6M451.25,368.6V357.6M453.10,357.6V368.6M454.90,368.6V357.6M456.75,357.6V368.6M458.55,368.6V357.6M460.40,357.6V368.6M462.20,368.6V357.6M464.05,357.6V368.6M465.85,368.6V357.6M467.70,357.6V368.6M469.51,368.6V357.6M471.36,357.6V368.6M473.16,368.6V357.6M475.01,357.6V368.6M476.81,368.6V357.6M478.66,357.6V368.6M480.46,368.6V357.6M482.31,357.6V368.6M484.12,368.6V357.6M485.97,357.6V368.6M487.77,368.6V357.6M489.62,357.6V368.6M491.42,368.6V357.6M493.27,357.6V368.6M495.07,368.6V357.6M496.92,357.6V368.6M498.73,368.6V357.6M500.58,357.6V368.6M502.38,368.6V357.6M504.23,357.6V368.6M506.03,368.6V357.6M507.88,357.6V368.6M509.68,368.6V357.6M511.53,357.6V368.6M513.34,368.6V357.6M515.19,357.6V368.6M516.99,368.6V357.6M518.84,357.6V368.6M520.64,368.6V357.6M522.49,357.6V368.6M524.29,368.6V357.6M526.14,357.6V368.6M527.95,368.6V357.6M529.80,357.6V368.6M531.60,368.6V357.6M533.45,357.6V368.6M535.25,368.6V357.6M537.10,357.6V368.6M538.90,368.6V357.6M540.75,357.6V368.6M542.56,368.6V357.6M544.41,357.6V368.6M546.21,368.6V357.6M548.06,357.6V368.6M549.86,368.6V357.6M551.71,357.6V368.6M553.51,368.6V357.6M555.36,357.6V368.6M557.16,368.6V357.6M559.01,357.6V368.6M560.82,368.6V357.6M562.67,357.6V368.6M564.47,368.6V357.6M566.32,357.6V368.6M568.12,368.6V357.6M569.97,357.6V368.6M571.77,368.6V357.6M573.62,357.6V368.6M575.43,368.6V357.6M577.28,357.6V368.6M579.08,368.6V357.6M580.93,357.6V368.6M582.73,368.6V357.6M584.58,357.6V368.6M586.38,368.6V357.6M588.23,357.6V368.6M590.04,368.6V357.6M591.89,357.6V368.6M593.69,368.6V357.6M595.54,357.6V368.6M597.34,368.6V357.6M599.19,357.6V368.6M600.99,368.6V357.6M602.84,357.6V368.6M604.65,368.6V357.6M606.50,357.6V368.6M608.30,368.6V357.6M610.15,357.6V368.6M611.95,368.6V357.6M613.80,357.6V368.6M615.60,368.6V357.6M617.45,357.6V368.6M619.26,368.6V357.6M621.11,357.6V368.6M622.91,368.6V357.6M624.76,357.6V368.6M626.56,368.6V357.6M628.41,357.6V368.6M630.21,368.6V357.6M632.06,357.6V368.6M633.87,368.6V357.6M635.72,357.6V368.6M637.52,368.6V357.6M639.37,357.6V368.6M641.17,368.6V357.6M643.02,357.6V368.6M644.82,368.6V357.6M646.67,357.6V368.6M648.47,368.6V357.6M650.32,357.6V368.6M652.13,368.6V357.6M653.98,357.6V368.6M655.78,368.6V357.6M657.63,357.6V368.6M659.43,368.6V357.6M661.28,357.6V368.6M663.08,368.6V357.6M664.93,357.6V368.6M666.74,368.6V357.6M668.59,357.6V368.6M670.39,368.6V357.6M672.24,357.6V368.6M674.04,368.6V357.6M675.89,357.6V368.6M677.69,368.6V357.6M679.54,357.6V368.6M681.35,368.6V357.6M683.20,357.6V368.6M685.00,368.6V357.6M686.85,357.6V368.6M688.65,368.6V357.6M690.50,357.6V368.6M692.30,368.6V357.6M694.15,357.6V368.6M695.96,368.6V357.6M697.81,357.6V368.6M699.61,368.6V357.6M701.46,357.6V368.6M703.26,368.6V357.6M705.11,357.6V368.6M706.91,368.6V357.6M708.76,357.6V368.6M710.57,368.6V357.6M712.42,357.6V368.6M714.22,368.6V357.6M716.07,357.6V368.6M717.87,368.6V357.6M719.72,357.6V368.6M721.52,368.6V357.6M723.37,357.6V368.6M725.18,368.6V357.6M727.03,357.6V368.6M728.83,368.6V357.6M730.68,357.6V368.6" stroke="#8c8c8c" stroke-width="0.7" fill="none"/><path d="M2.00,357.6H3.85M5.65,357.6H7.50M9.30,357.6H11.15M12.96,357.6H14.81M16.61,357.6H18.46M20.26,357.6H22.11M23.91,357.6H25.76M27.57,357.6H29.42M31.22,357.6H33.07M34.87,357.6H36.72M38.52,357.6H40.37M42.18,357.6H44.03M45.83,357.6H47.68M49.48,357.6H51.33M53.13,357.6H54.98M56.79,357.6H58.64M60.44,357.6H62.29M64.09,357.6H65.94M67.74,357.6H69.59M71.40,357.6H73.25M75.05,357.6H76.90M78.70,357.6H80.55M82.35,357.6H84.20M86.01,357.6H87.86M89.66,357.6H91.51M93.31,357.6H95.16M96.96,357.6H98.81M100.61,357.6H102.46M104.27,357.6H106.12M107.92,357.6H109.77M111.57,357.6H113.42M115.22,357.6H117.07M118.88,357.6H120.73M122.53,357.6H124.38M126.18,357.6H128.03M129.83,357.6H131.68M133.49,357.6H135.34M137.14,357.6H138.99M140.79,357.6H142.64M144.44,357.6H146.29M148.10,357.6H149.95M151.75,357.6H153.60M155.40,357.6H157.25M159.05,357.6H160.90M162.71,357.6H164.56M166.36,357.6H168.21M170.01,357.6H171.86M173.66,357.6H175.51M177.32,357.6H179.17M180.97,357.6H182.82M184.62,357.6H186.47M188.27,357.6H190.12M191.92,357.6H193.77M195.58,357.6H197.43M199.23,357.6H201.08M202.88,357.6H204.73M206.53,357.6H208.38M210.19,357.6H212.04M213.84,357.6H215.69M217.49,357.6H219.34M221.14,357.6H222.99M224.80,357.6H226.65M228.45,357.6H230.30M232.10,357.6H233.95M235.75,357.6H237.60M239.41,357.6H241.26M243.06,357.6H244.91M246.71,357.6H248.56M250.36,357.6H252.21M254.02,357.6H255.87M257.67,357.6H259.52M261.32,357.6H263.17M264.97,357.6H266.82M268.63,357.6H270.48M272.28,357.6H274.13M275.93,357.6H277.78M279.58,357.6H281.43M283.23,357.6H285.08M286.89,357.6H288.74M290.54,357.6H292.39M294.19,357.6H296.04M297.84,357.6H299.69M301.50,357.6H303.35M305.15,357.6H307.00M308.80,357.6H310.65M312.45,357.6H314.30M316.11,357.6H317.96M319.76,357.6H321.61M323.41,357.6H325.26M327.06,357.6H328.91M330.72,357.6H332.57M334.37,357.6H336.22M338.02,357.6H339.87M341.67,357.6H343.52M345.33,357.6H347.18M348.98,357.6H350.83M352.63,357.6H354.48M356.28,357.6H358.13M359.94,357.6H361.79M363.59,357.6H365.44M367.24,357.6H369.09M370.89,357.6H372.74M374.54,357.6H376.39M378.20,357.6H380.05M381.85,357.6H383.70M385.50,357.6H387.35M389.15,357.6H391.00M392.81,357.6H394.66M396.46,357.6H398.31M400.11,357.6H401.96M403.76,357.6H405.61M407.42,357.6H409.27M411.07,357.6H412.92M414.72,357.6H416.57M418.37,357.6H420.22M422.03,357.6H423.88M425.68,357.6H427.53M429.33,357.6H431.18M432.98,357.6H434.83M436.64,357.6H438.49M440.29,357.6H442.14M443.94,357.6H445.79M447.59,357.6H449.44M451.25,357.6H453.10M454.90,357.6H456.75M458.55,357.6H460.40M462.20,357.6H464.05M465.85,357.6H467.70M469.51,357.6H471.36M473.16,357.6H475.01M476.81,357.6H478.66M480.46,357.6H482.31M484.12,357.6H485.97M487.77,357.6H489.62M491.42,357.6H493.27M495.07,357.6H496.92M498.73,357.6H500.58M502.38,357.6H504.23M506.03,357.6H507.88M509.68,357.6H511.53M513.34,357.6H515.19M516.99,357.6H518.84M520.64,357.6H522.49M524.29,357.6H526.14M527.95,357.6H529.80M531.60,357.6H533.45M535.25,357.6H537.10M538.90,357.6H540.75M542.56,357.6H544.41M546.21,357.6H548.06M549.86,357.6H551.71M553.51,357.6H555.36M557.16,357.6H559.01M560.82,357.6H562.67M564.47,357.6H566.32M568.12,357.6H569.97M571.77,357.6H573.62M575.43,357.6H577.28M579.08,357.6H580.93M582.73,357.6H584.58M586.38,357.6H588.23M590.04,357.6H591.89M593.69,357.6H595.54M597.34,357.6H599.19M600.99,357.6H602.84M604.65,357.6H606.50M608.30,357.6H610.15M611.95,357.6H613.80M615.60,357.6H617.45M619.26,357.6H621.11M622.91,357.6H624.76M626.56,357.6H628.41M630.21,357.6H632.06M633.87,357.6H635.72M637.52,357.6H639.37M641.17,357.6H643.02M644.82,357.6H646.67M648.47,357.6H650.32M652.13,357.6H653.98M655.78,357.6H657.63M659.43,357.6H661.28M663.08,357.6H664.93M666.74,357.6H668.59M670.39,357.6H672.24M674.04,357.6H675.89M677.69,357.6H679.54M681.35,357.6H683.20M685.00,357.6H686.85M688.65,357.6H690.50M692.30,357.6H694.15M695.96,357.6H697.81M699.61,357.6H701.46M703.26,357.6H705.11M706.91,357.6H708.76M710.57,357.6H712.42M714.22,357.6H716.07M717.87,357.6H719.72M721.52,357.6H723.37M725.18,357.6H727.03M728.83,357.6H730.68" stroke="#166a16" stroke-width="0.8" fill="none"/><line x1="2" y1="368.6" x2="729" y2="368.6" stroke="#1a1ab0" stroke-width="1" stroke-dasharray="1.8 1.85"/><line x1="2" y1="364.4" x2="729" y2="364.4" stroke="#bfbfbf" stroke-width="0.6" stroke-dasharray="1 2.65"/><rect x="4.5" y="356" width="25" height="14" fill="#000"/><line x1="1" y1="384.5" x2="257" y2="384.5" stroke="#1c1cb4" stroke-width="1.1"/><line x1="257" y1="373.8" x2="257" y2="384.5" stroke="#a0a0a0" stroke-width="0.9"/><line x1="257" y1="373.8" x2="275.5" y2="373.8" stroke="#1e7a1e" stroke-width="1.1"/><line x1="275.5" y1="373.8" x2="275.5" y2="384.5" stroke="#a0a0a0" stroke-width="0.9"/><line x1="275.5" y1="384.5" x2="312" y2="384.5" stroke="#1c1cb4" stroke-width="1.1"/><line x1="312" y1="373.8" x2="312" y2="384.5" stroke="#a0a0a0" stroke-width="0.9"/><line x1="312" y1="373.8" x2="315.5" y2="373.8" stroke="#1e7a1e" stroke-width="1.1"/><line x1="315.5" y1="373.8" x2="315.5" y2="384.5" stroke="#a0a0a0" stroke-width="0.9"/><line x1="315.5" y1="384.5" x2="322.5" y2="384.5" stroke="#1c1cb4" stroke-width="1.1"/><line x1="322.5" y1="373.8" x2="322.5" y2="384.5" stroke="#a0a0a0" stroke-width="0.9"/><line x1="322.5" y1="373.8" x2="327" y2="373.8" stroke="#1e7a1e" stroke-width="1.1"/><line x1="327" y1="373.8" x2="327" y2="384.5" stroke="#a0a0a0" stroke-width="0.9"/><line x1="327" y1="384.5" x2="333.3" y2="384.5" stroke="#1c1cb4" stroke-width="1.1"/><line x1="333.3" y1="373.8" x2="333.3" y2="384.5" stroke="#a0a0a0" stroke-width="0.9"/><line x1="333.3" y1="373.8" x2="341.7" y2="373.8" stroke="#1e7a1e" stroke-width="1.1"/><line x1="341.7" y1="373.8" x2="341.7" y2="384.5" stroke="#a0a0a0" stroke-width="0.9"/><line x1="341.7" y1="384.5" x2="410.5" y2="384.5" stroke="#1c1cb4" stroke-width="1.1"/><line x1="410.5" y1="373.8" x2="410.5" y2="384.5" stroke="#a0a0a0" stroke-width="0.9"/><line x1="410.5" y1="373.8" x2="414.5" y2="373.8" stroke="#1e7a1e" stroke-width="1.1"/><line x1="414.5" y1="373.8" x2="414.5" y2="384.5" stroke="#a0a0a0" stroke-width="0.9"/><line x1="414.5" y1="384.5" x2="443" y2="384.5" stroke="#1c1cb4" stroke-width="1.1"/><line x1="443" y1="373.8" x2="443" y2="384.5" stroke="#a0a0a0" stroke-width="0.9"/><line x1="443" y1="373.8" x2="447" y2="373.8" stroke="#1e7a1e" stroke-width="1.1"/><line x1="447" y1="373.8" x2="447" y2="384.5" stroke="#a0a0a0" stroke-width="0.9"/><line x1="447" y1="384.5" x2="472" y2="384.5" stroke="#1c1cb4" stroke-width="1.1"/><line x1="472" y1="373.8" x2="472" y2="384.5" stroke="#a0a0a0" stroke-width="0.9"/><line x1="472" y1="373.8" x2="480" y2="373.8" stroke="#1e7a1e" stroke-width="1.1"/><line x1="480" y1="373.8" x2="480" y2="384.5" stroke="#a0a0a0" stroke-width="0.9"/><line x1="480" y1="384.5" x2="490.5" y2="384.5" stroke="#1c1cb4" stroke-width="1.1"/><line x1="490.5" y1="373.8" x2="490.5" y2="384.5" stroke="#a0a0a0" stroke-width="0.9"/><line x1="490.5" y1="373.8" x2="494.5" y2="373.8" stroke="#1e7a1e" stroke-width="1.1"/><line x1="494.5" y1="373.8" x2="494.5" y2="384.5" stroke="#a0a0a0" stroke-width="0.9"/><line x1="494.5" y1="384.5" x2="501.8" y2="384.5" stroke="#1c1cb4" stroke-width="1.1"/><line x1="501.8" y1="373.8" x2="501.8" y2="384.5" stroke="#a0a0a0" stroke-width="0.9"/><line x1="501.8" y1="373.8" x2="515.8" y2="373.8" stroke="#1e7a1e" stroke-width="1.1"/><line x1="515.8" y1="373.8" x2="515.8" y2="384.5" stroke="#a0a0a0" stroke-width="0.9"/><line x1="515.8" y1="384.5" x2="519.3" y2="384.5" stroke="#1c1cb4" stroke-width="1.1"/><line x1="519.3" y1="373.8" x2="519.3" y2="384.5" stroke="#a0a0a0" stroke-width="0.9"/><line x1="519.3" y1="373.8" x2="523.8" y2="373.8" stroke="#1e7a1e" stroke-width="1.1"/><line x1="523.8" y1="373.8" x2="523.8" y2="384.5" stroke="#a0a0a0" stroke-width="0.9"/><line x1="523.8" y1="384.5" x2="729" y2="384.5" stroke="#1c1cb4" stroke-width="1.1"/><line x1="1" y1="389.4" x2="253.8" y2="389.4" stroke="#1e7a1e" stroke-width="1.1"/><line x1="253.8" y1="389.4" x2="253.8" y2="400.5" stroke="#a0a0a0" stroke-width="0.9"/><line x1="253.8" y1="400.5" x2="341.3" y2="400.5" stroke="#1c1cb4" stroke-width="1.1"/><line x1="341.3" y1="389.4" x2="341.3" y2="400.5" stroke="#a0a0a0" stroke-width="0.9"/><line x1="341.3" y1="389.4" x2="344.3" y2="389.4" stroke="#1e7a1e" stroke-width="1.1"/><line x1="344.3" y1="389.4" x2="344.3" y2="400.5" stroke="#a0a0a0" stroke-width="0.9"/><line x1="344.3" y1="400.5" x2="432" y2="400.5" stroke="#1c1cb4" stroke-width="1.1"/><line x1="432" y1="389.4" x2="432" y2="400.5" stroke="#a0a0a0" stroke-width="0.9"/><line x1="432" y1="389.4" x2="436.3" y2="389.4" stroke="#1e7a1e" stroke-width="1.1"/><line x1="436.3" y1="389.4" x2="436.3" y2="400.5" stroke="#a0a0a0" stroke-width="0.9"/><line x1="436.3" y1="400.5" x2="523.8" y2="400.5" stroke="#1c1cb4" stroke-width="1.1"/><line x1="523.8" y1="389.4" x2="523.8" y2="400.5" stroke="#a0a0a0" stroke-width="0.9"/><line x1="523.8" y1="389.4" x2="729" y2="389.4" stroke="#1e7a1e" stroke-width="1.1"/><polygon points="252,22.5 260,22.5 256,26.5" fill="#f39a2c"/><path d="M252.5,316.6 h8 v8 h-2.6 l-1.4,2.6 l-1.4,-2.6 h-2.6 z" fill="#000" stroke="#e8902c" stroke-width="1"/><path d="M254.6,318.9 h3.8 M256.5,318.9 v4.3" stroke="#e8902c" stroke-width="1.1"/><path d="M326.2,15 h5.6 v5 l-2.8,2 l-2.8,-2 z" fill="#1a1000" stroke="#e8902c" stroke-width="1"/><path d="M327.5,16.8 h3 M329,16.8 v3" stroke="#e8902c" stroke-width="0.8"/><polygon points="326.5,12.2 331.5,12.2 329,14" fill="#f39a2c"/><path d="M2.5,102.6 h10.5 l4.5,5 l-4.5,5 h-10.5 z" fill="#1e1c00" stroke="#b0a000" stroke-width="1"/><path d="M2.5,202.4 h10.5 l4.5,5 l-4.5,5 h-10.5 z" fill="#001214" stroke="#1c9aa4" stroke-width="1"/><path d="M2.5,303.6 h10.5 l4.5,5 l-4.5,5 h-10.5 z" fill="#120004" stroke="#8a1f2c" stroke-width="1"/><path d="M2.5,340.3 h10.5 l4.5,4.8 l-4.5,4.8 h-10.5 z" fill="#c89af0"/><rect x="22.5" y="341.3" width="15.5" height="7.8" fill="#141414" stroke="#303030" stroke-width="0.6"/><rect x="22.5" y="344" width="15.5" height="2" fill="#3c1040"/><line x1="28" y1="345.1" x2="33" y2="345.1" stroke="#9a9a9a" stroke-width="0.7"/><polygon points="713,25 727,25 727,39" fill="#5a5a5a"/><circle cx="724" cy="28.3" r="2" fill="none" stroke="#cfcfcf" stroke-width="0.9"/><line x1="722.6" y1="29.7" x2="719.8" y2="32.5" stroke="#cfcfcf" stroke-width="0.9"/></svg>
<span class="t" style="left:5.98px;top:105.00px;font-size:5.2px;color:#c8b400;">C1</span>
<span class="t" style="left:5.98px;top:205.00px;font-size:5.2px;color:#1c9aa4;">C2</span>
<span class="t" style="left:5.98px;top:306.00px;font-size:5.2px;color:#a02838;">C3</span>
<span class="t" style="left:6.12px;top:343.00px;font-size:5.2px;color:#5a3a8a;">B1</span>
<span class="t" style="left:22.00px;top:332.00px;font-size:8.4px;color:#a878dc;transform:scaleX(0.768);transform-origin:left top;">SPI</span>
<span class="t" style="left:722.50px;top:105.00px;font-size:6.3px;color:#cdc68a;">0</span>
<span class="t" style="left:708.49px;top:95.00px;font-size:6.3px;color:#cdc68a;">460 m</span>
<span class="t" style="left:708.49px;top:85.00px;font-size:6.3px;color:#cdc68a;">920 m</span>
<span class="t" style="left:713.74px;top:76.00px;font-size:6.3px;color:#cdc68a;">1.38</span>
<span class="t" style="left:713.74px;top:66.00px;font-size:6.3px;color:#cdc68a;">1.84</span>
<span class="t" style="left:713.74px;top:57.00px;font-size:6.3px;color:#cdc68a;">2.30</span>
<span class="t" style="left:713.74px;top:47.00px;font-size:6.3px;color:#cdc68a;">2.76</span>
<span class="t" style="left:713.74px;top:37.00px;font-size:6.3px;color:#cdc68a;">3.22</span>
<span class="t" style="left:722.50px;top:204.00px;font-size:6.3px;color:#24a8b4;">0</span>
<span class="t" style="left:708.49px;top:195.00px;font-size:6.3px;color:#24a8b4;">400 m</span>
<span class="t" style="left:708.49px;top:185.00px;font-size:6.3px;color:#24a8b4;">800 m</span>
<span class="t" style="left:713.74px;top:175.00px;font-size:6.3px;color:#24a8b4;">1.20</span>
<span class="t" style="left:713.74px;top:166.00px;font-size:6.3px;color:#24a8b4;">1.60</span>
<span class="t" style="left:722.50px;top:156.00px;font-size:6.3px;color:#24a8b4;">2</span>
<span class="t" style="left:713.74px;top:147.00px;font-size:6.3px;color:#24a8b4;">2.40</span>
<span class="t" style="left:713.74px;top:137.00px;font-size:6.3px;color:#24a8b4;">2.80</span>
<span class="t" style="left:713.74px;top:127.00px;font-size:6.3px;color:#24a8b4;">3.20</span>
<span class="t" style="left:722.50px;top:306.00px;font-size:6.3px;color:#c8283c;">0</span>
<span class="t" style="left:708.49px;top:296.00px;font-size:6.3px;color:#c8283c;">400 m</span>
<span class="t" style="left:708.49px;top:286.00px;font-size:6.3px;color:#c8283c;">800 m</span>
<span class="t" style="left:713.74px;top:277.00px;font-size:6.3px;color:#c8283c;">1.20</span>
<span class="t" style="left:713.74px;top:267.00px;font-size:6.3px;color:#c8283c;">1.60</span>
<span class="t" style="left:722.50px;top:257.00px;font-size:6.3px;color:#c8283c;">2</span>
<span class="t" style="left:713.74px;top:247.00px;font-size:6.3px;color:#c8283c;">2.40</span>
<span class="t" style="left:713.74px;top:238.00px;font-size:6.3px;color:#c8283c;">2.80</span>
<span class="t" style="left:713.74px;top:228.00px;font-size:6.3px;color:#c8283c;">3.20</span>
<span class="t" style="left:713.74px;top:218.00px;font-size:6.3px;color:#c8283c;">3.60</span>
<span class="t" style="left:29.62px;top:407.00px;font-size:6.4px;color:#a4a4a4;">-6 µs</span>
<span class="t" style="left:102.52px;top:407.00px;font-size:6.4px;color:#a4a4a4;">-4 µs</span>
<span class="t" style="left:175.42px;top:407.00px;font-size:6.4px;color:#a4a4a4;">-2 µs</span>
<span class="t" style="left:251.23px;top:407.00px;font-size:6.4px;color:#a4a4a4;">0 s</span>
<span class="t" style="left:322.29px;top:407.00px;font-size:6.4px;color:#a4a4a4;">2 µs</span>
<span class="t" style="left:395.19px;top:407.00px;font-size:6.4px;color:#a4a4a4;">4 µs</span>
<span class="t" style="left:468.09px;top:407.00px;font-size:6.4px;color:#a4a4a4;">6 µs</span>
<span class="t" style="left:540.99px;top:407.00px;font-size:6.4px;color:#a4a4a4;">8 µs</span>
<span class="t" style="left:612.11px;top:407.00px;font-size:6.4px;color:#a4a4a4;">10 µs</span>
<span class="t" style="left:685.01px;top:407.00px;font-size:6.4px;color:#a4a4a4;">12 µs</span>
<span class="t" style="left:271.38px;top:342.00px;font-size:8.2px;color:#e8e8e8;font-weight:700;transform:scaleX(0.931);transform-origin:center top;">Data:7C0093h</span>
<span class="t" style="left:363.36px;top:342.00px;font-size:8.2px;color:#e8e8e8;font-weight:700;transform:scaleX(0.955);transform-origin:center top;">Data:000020h</span>
<span class="t" style="left:453.88px;top:342.00px;font-size:8.2px;color:#e8e8e8;font-weight:700;transform:scaleX(0.931);transform-origin:center top;">Data:20313Dh</span>
<span class="t" style="left:5.60px;top:358.00px;font-size:9.7px;color:#e0e0e0;transform:scaleX(0.876);transform-origin:left top;">SCLK</span>
<span class="t" style="left:5.60px;top:373.00px;font-size:9.7px;color:#e0e0e0;transform:scaleX(0.943);transform-origin:left top;">SDA</span>
<span class="t" style="left:5.60px;top:389.00px;font-size:9.7px;color:#e0e0e0;transform:scaleX(0.726);transform-origin:left top;">SS</span>
<div class="a" style="left:731px;top:12px;width:1px;height:403px;background:#262626;"></div>
<div class="a" style="left:733.3px;top:208.3px;width:1.7px;height:1.7px;background:#cfcfcf;"></div>
<div class="a" style="left:733.3px;top:212px;width:1.7px;height:1.7px;background:#cfcfcf;"></div>
<div class="a" style="left:733.3px;top:215.7px;width:1.7px;height:1.7px;background:#cfcfcf;"></div>
<div class="a" style="left:737px;top:11px;width:62.5px;height:404px;background:#333;border:1px solid #474747;"></div>
<span class="t" style="left:752.46px;top:12.00px;font-size:6.4px;color:#e4e4e4;font-weight:700;">Add New...</span>
<div class="a" style="left:740.3px;top:22.2px;width:25.800000000000068px;height:15.400000000000002px;background:#2c2c2c;border:1px solid #4b4642;border-radius:3px;"></div>
<div class="a" style="left:740.3px;top:41.3px;width:25.800000000000068px;height:14.0px;background:#2c2c2c;border:1px solid #4b4642;border-radius:3px;"></div>
<div class="a" style="left:740.3px;top:60px;width:25.800000000000068px;height:14.200000000000003px;background:#2c2c2c;border:1px solid #4b4642;border-radius:3px;"></div>
<div class="a" style="left:769.3px;top:22.2px;width:26.700000000000045px;height:15.400000000000002px;background:#2c2c2c;border:1px solid #4b4642;border-radius:3px;"></div>
<div class="a" style="left:769.3px;top:41.3px;width:26.700000000000045px;height:14.0px;background:#2c2c2c;border:1px solid #4b4642;border-radius:3px;"></div>
<div class="a" style="left:769.3px;top:60px;width:26.700000000000045px;height:14.200000000000003px;background:#2c2c2c;border:1px solid #4b4642;border-radius:3px;"></div>
<span class="t" style="left:741.30px;top:27.00px;font-size:6.8px;color:#dedede;transform:scaleX(0.895);transform-origin:center top;">Cursors</span>
<span class="t" style="left:775.42px;top:27.00px;font-size:6.8px;color:#dedede;transform:scaleX(0.989);transform-origin:center top;">Note</span>
<span class="t" style="left:739.97px;top:45.00px;font-size:6.8px;color:#dedede;transform:scaleX(0.945);transform-origin:center top;">Measure</span>
<span class="t" style="left:771.83px;top:45.00px;font-size:6.8px;color:#dedede;transform:scaleX(0.905);transform-origin:center top;">Search</span>
<span class="t" style="left:742.20px;top:61.00px;font-size:6.6px;color:#dedede;transform:scaleX(0.886);transform-origin:center top;">Results</span>
<span class="t" style="left:745.31px;top:67.00px;font-size:6.6px;color:#dedede;transform:scaleX(0.951);transform-origin:center top;">Table</span>
<span class="t" style="left:776.74px;top:64.00px;font-size:6.8px;color:#dedede;transform:scaleX(1.024);transform-origin:center top;">Plot</span>
<div class="a" style="left:738px;top:77.5px;width:61px;height:1px;background:#474747;"></div>
<div class="a" style="left:738px;top:392.6px;width:61px;height:1px;background:#474747;"></div>
<div class="a" style="left:740.5px;top:396.9px;width:25.299999999999955px;height:15.0px;background:#2c2c2c;border:1px solid #4b4642;border-radius:3px;"></div>
<svg class="a" style="left:740px;top:396px" width="60" height="17" viewBox="740 396 60 17">
<path d="M748.8,399.4 v6.2 M748.8,399.4 h5.6" stroke="#aaa" stroke-width="0.6" stroke-dasharray="0.8 0.9" fill="none"/>
<circle cx="753.6" cy="404.6" r="2.5" fill="none" stroke="#a8a8a8" stroke-width="0.9"/>
<line x1="755.4" y1="406.4" x2="758" y2="409" stroke="#b8b8b8" stroke-width="1.3"/>
<path d="M779.3,398.6 h10 l-1,12 h-8 z" fill="none" stroke="#d0d0d0" stroke-width="0.9"/>
<line x1="779" y1="400.3" x2="789.6" y2="400.3" stroke="#d0d0d0" stroke-width="0.7"/>
<path d="M782,402 v7 M784.3,402 v7 M786.6,402 v7" stroke="#bdbdbd" stroke-width="0.6"/>
</svg>
<div class="a" style="left:1px;top:416px;width:37.8px;height:32.8px;background:#d5d5d5;border-radius:2px;overflow:hidden;"></div>
<div class="a" style="left:1px;top:416px;width:37.8px;height:7.7px;background:#5a5526;border-radius:2px 2px 0 0;"></div>
<span class="t" style="left:4.00px;top:417.00px;font-size:6.5px;color:#d8cc10;transform:scaleX(0.823);transform-origin:left top;">Ch 1</span>
<span class="t" style="left:4.00px;top:426.00px;font-size:6.4px;color:#161616;transform:scaleX(1.027);transform-origin:left top;">460 m/div</span>
<span class="t" style="left:4.00px;top:442.00px;font-size:6.4px;color:#161616;">50 MHz</span>
<div class="a" style="left:41px;top:416px;width:37px;height:32.8px;background:#d5d5d5;border-radius:2px;overflow:hidden;"></div>
<div class="a" style="left:41px;top:416px;width:37px;height:7.7px;background:#1e4748;border-radius:2px 2px 0 0;"></div>
<span class="t" style="left:44.00px;top:417.00px;font-size:6.5px;color:#2ab8c4;transform:scaleX(0.823);transform-origin:left top;">Ch 2</span>
<span class="t" style="left:44.00px;top:426.00px;font-size:6.4px;color:#161616;transform:scaleX(1.027);transform-origin:left top;">400 m/div</span>
<span class="t" style="left:44.00px;top:442.00px;font-size:6.4px;color:#161616;">50 MHz</span>
<div class="a" style="left:80px;top:416px;width:38.099999999999994px;height:32.8px;background:#d5d5d5;border-radius:2px;overflow:hidden;"></div>
<div class="a" style="left:80px;top:416px;width:38.099999999999994px;height:7.7px;background:#4a2227;border-radius:2px 2px 0 0;"></div>
<span class="t" style="left:83.00px;top:417.00px;font-size:6.5px;color:#e0384a;transform:scaleX(0.823);transform-origin:left top;">Ch 3</span>
<span class="t" style="left:83.00px;top:426.00px;font-size:6.4px;color:#161616;transform:scaleX(1.027);transform-origin:left top;">400 m/div</span>
<span class="t" style="left:83.00px;top:442.00px;font-size:6.4px;color:#161616;">50 MHz</span>
<div class="a" style="left:120px;top:416px;width:37.69999999999999px;height:32.8px;background:#d5d5d5;border-radius:2px;overflow:hidden;"></div>
<div class="a" style="left:120px;top:416px;width:37.69999999999999px;height:7.7px;background:#c99cf6;border-radius:2px 2px 0 0;"></div>
<span class="t" style="left:123.00px;top:417.00px;font-size:6.5px;color:#3c2868;">Bus 1</span>
<span class="t" style="left:123.00px;top:426.00px;font-size:6.4px;color:#161616;transform:scaleX(0.775);transform-origin:left top;">SPI</span>
<svg class="a" style="left:1px;top:416px" width="38" height="33" viewBox="0 0 38 33">
<path d="M5,21 q0,-3.3 3,-3.3 q3,0 3,3.3" fill="none" stroke="#3a3a3a" stroke-width="1.1"/>
<path d="M4.6,22.3 q3.4,2.2 6.8,0" fill="none" stroke="#8a8a8a" stroke-width="0.6"/>
<rect x="32.2" y="26.6" width="1.3" height="2.6" fill="#2a2a2a"/>
<path d="M33.5,28.6 l1.4,0.9 h1.4" stroke="#2a2a2a" stroke-width="1.2" fill="none"/>
</svg>
<svg class="a" style="left:41px;top:416px" width="38" height="33" viewBox="0 0 38 33">
<path d="M5,21 q0,-3.3 3,-3.3 q3,0 3,3.3" fill="none" stroke="#3a3a3a" stroke-width="1.1"/>
<path d="M4.6,22.3 q3.4,2.2 6.8,0" fill="none" stroke="#8a8a8a" stroke-width="0.6"/>
<rect x="32.2" y="26.6" width="1.3" height="2.6" fill="#2a2a2a"/>
<path d="M33.5,28.6 l1.4,0.9 h1.4" stroke="#2a2a2a" stroke-width="1.2" fill="none"/>
</svg>
<svg class="a" style="left:80px;top:416px" width="38" height="33" viewBox="0 0 38 33">
<path d="M5,21 q0,-3.3 3,-3.3 q3,0 3,3.3" fill="none" stroke="#3a3a3a" stroke-width="1.1"/>
<path d="M4.6,22.3 q3.4,2.2 6.8,0" fill="none" stroke="#8a8a8a" stroke-width="0.6"/>
<rect x="32.2" y="26.6" width="1.3" height="2.6" fill="#2a2a2a"/>
<path d="M33.5,28.6 l1.4,0.9 h1.4" stroke="#2a2a2a" stroke-width="1.2" fill="none"/>
</svg>
<div class="a" style="left:333.1px;top:415.8px;width:16.600000000000023px;height:33.4px;background:#2a2a2a;border:1px solid #46423f;border-radius:3px;"></div>
<div class="a" style="left:335.6px;top:419px;width:11.600000000000023px;height:1.3px;background:#7cc040;"></div>
<span class="t" style="left:338.79px;top:427.00px;font-size:9.4px;color:#e4e4e4;">4</span>
<div class="a" style="left:351.85px;top:415.8px;width:16.600000000000023px;height:33.4px;background:#2a2a2a;border:1px solid #46423f;border-radius:3px;"></div>
<div class="a" style="left:354.35px;top:419px;width:11.600000000000023px;height:1.3px;background:#ef9133;"></div>
<span class="t" style="left:357.54px;top:427.00px;font-size:9.4px;color:#e4e4e4;">5</span>
<div class="a" style="left:370.6px;top:415.8px;width:16.600000000000023px;height:33.4px;background:#2a2a2a;border:1px solid #46423f;border-radius:3px;"></div>
<div class="a" style="left:373.1px;top:419px;width:11.600000000000023px;height:1.3px;background:#3434c8;"></div>
<span class="t" style="left:376.29px;top:427.00px;font-size:9.4px;color:#e4e4e4;">6</span>
<div class="a" style="left:389.35px;top:415.8px;width:16.600000000000023px;height:33.4px;background:#2a2a2a;border:1px solid #46423f;border-radius:3px;"></div>
<div class="a" style="left:391.85px;top:419px;width:11.600000000000023px;height:1.3px;background:#dc5aa8;"></div>
<span class="t" style="left:395.04px;top:427.00px;font-size:9.4px;color:#e4e4e4;">7</span>
<div class="a" style="left:408.1px;top:415.8px;width:16.600000000000023px;height:33.4px;background:#2a2a2a;border:1px solid #46423f;border-radius:3px;"></div>
<div class="a" style="left:410.6px;top:419px;width:11.600000000000023px;height:1.3px;background:#1fc08c;"></div>
<span class="t" style="left:413.79px;top:427.00px;font-size:9.4px;color:#e4e4e4;">8</span>
<div class="a" style="left:429px;top:416px;width:1px;height:33px;background:#262626;"></div>
<div class="a" style="left:433.6px;top:415.8px;width:16.19999999999999px;height:33.4px;background:#2a2a2a;border:1px solid #46423f;border-radius:3px;"></div>
<div class="a" style="left:436.1px;top:419px;width:11.199999999999989px;height:1.3px;background:#ef9133;"></div>
<span class="t" style="left:435.83px;top:423.00px;font-size:6.6px;color:#e0e0e0;">Add</span>
<span class="t" style="left:435.10px;top:430.00px;font-size:6.6px;color:#e0e0e0;">New</span>
<span class="t" style="left:434.36px;top:437.00px;font-size:6.6px;color:#e0e0e0;">Math</span>
<div class="a" style="left:452.3px;top:415.8px;width:16.19999999999999px;height:33.4px;background:#2a2a2a;border:1px solid #46423f;border-radius:3px;"></div>
<div class="a" style="left:454.8px;top:419px;width:11.199999999999989px;height:1.3px;background:#c8c8c8;"></div>
<span class="t" style="left:454.53px;top:423.00px;font-size:6.6px;color:#e0e0e0;">Add</span>
<span class="t" style="left:453.80px;top:430.00px;font-size:6.6px;color:#e0e0e0;">New</span>
<span class="t" style="left:455.26px;top:437.00px;font-size:6.6px;color:#e0e0e0;">Ref</span>
<div class="a" style="left:471.0px;top:415.8px;width:16.19999999999999px;height:33.4px;background:#2a2a2a;border:1px solid #46423f;border-radius:3px;"></div>
<div class="a" style="left:473.5px;top:419px;width:11.199999999999989px;height:1.3px;background:#b05ad8;"></div>
<span class="t" style="left:473.23px;top:423.00px;font-size:6.6px;color:#e0e0e0;">Add</span>
<span class="t" style="left:472.50px;top:430.00px;font-size:6.6px;color:#e0e0e0;">New</span>
<span class="t" style="left:473.41px;top:437.00px;font-size:6.6px;color:#e0e0e0;">Bus</span>
<div class="a" style="left:491.4px;top:416px;width:1px;height:33px;background:#262626;"></div>
<div class="a" style="left:496px;top:415.8px;width:16.600000000000023px;height:33.4px;background:#2a2a2a;border:1px solid #46423f;border-radius:3px;"></div>
<div class="a" style="left:498.5px;top:419px;width:11.600000000000023px;height:1.3px;background:#3e3e3e;"></div>
<span class="t" style="left:496.97px;top:429.00px;font-size:6.6px;color:#e0e0e0;transform:scaleX(0.955);transform-origin:center top;">DVM</span>
<div class="a" style="left:517px;top:415.8px;width:16.5px;height:33.4px;background:#2a2a2a;border:1px solid #46423f;border-radius:3px;"></div>
<div class="a" style="left:519.5px;top:419px;width:11.5px;height:1.3px;background:#3e3e3e;"></div>
<span class="t" style="left:518.52px;top:429.00px;font-size:6.6px;color:#e0e0e0;transform:scaleX(0.884);transform-origin:center top;">AFG</span>
<div class="a" style="left:539.5px;top:416px;width:1px;height:33px;background:#262626;"></div>
<div class="a" style="left:542.3px;top:416px;width:77.30000000000007px;height:32.8px;background:#d5d5d5;border-radius:2px;overflow:hidden;"></div>
<div class="a" style="left:542.3px;top:416px;width:77.30000000000007px;height:7.7px;background:#565656;border-radius:2px 2px 0 0;"></div>
<span class="t" style="left:545.30px;top:417.00px;font-size:6.5px;color:#dcdcdc;transform:scaleX(1.025);transform-origin:left top;">Horizontal</span>
<span class="t" style="left:545.50px;top:426.00px;font-size:6.4px;color:#161616;">2 µs/div</span>
<span class="t" style="left:589.80px;top:426.00px;font-size:6.4px;color:#161616;">20 µs</span>
<span class="t" style="left:545.50px;top:434.00px;font-size:6.4px;color:#161616;transform:scaleX(0.897);transform-origin:left top;">SR: 125 MS/s</span>
<span class="t" style="left:589.80px;top:434.00px;font-size:6.4px;color:#161616;">8 ns/pt</span>
<span class="t" style="left:545.50px;top:442.00px;font-size:6.4px;color:#161616;">RL: 2.5 kpts</span>
<span class="t" style="left:597.40px;top:442.00px;font-size:6.4px;color:#161616;">35%</span>
<div class="a" style="left:590.5px;top:442px;width:3.4px;height:4.2px;background:#e8902c;border-radius:0 0 1.7px 1.7px;"></div>
<div class="a" style="left:621.6px;top:416px;width:1px;height:33px;background:#262626;"></div>
<div class="a" style="left:623.9px;top:416px;width:66.39999999999998px;height:32.8px;background:#d5d5d5;border-radius:2px;overflow:hidden;"></div>
<div class="a" style="left:623.9px;top:416px;width:66.39999999999998px;height:7.7px;background:#565656;border-radius:2px 2px 0 0;"></div>
<span class="t" style="left:626.90px;top:417.00px;font-size:6.5px;color:#dcdcdc;">Trigger</span>
<span class="t" style="left:643.00px;top:426.00px;font-size:6.4px;color:#161616;">SPI</span>
<span class="t" style="left:627.10px;top:434.00px;font-size:6.4px;color:#161616;">SS Active</span>
<div class="a" style="left:627px;top:426px;width:11.9px;height:6.8px;background:#c99cf6;border:1px solid #8d5ccc;border-radius:2px;"></div>
<span class="t" style="left:629.47px;top:427.00px;font-size:5.6px;color:#3c2868;">B1</span>
<div class="a" style="left:694.8px;top:416px;width:62.30000000000007px;height:32.8px;background:#d5d5d5;border-radius:2px;overflow:hidden;"></div>
<div class="a" style="left:694.8px;top:416px;width:62.30000000000007px;height:7.7px;background:#565656;border-radius:2px 2px 0 0;"></div>
<span class="t" style="left:697.80px;top:417.00px;font-size:6.5px;color:#dcdcdc;">Acquisition</span>
<span class="t" style="left:697.60px;top:426.00px;font-size:6.4px;color:#161616;">Auto,</span>
<span class="t" style="left:722.30px;top:426.00px;font-size:6.4px;color:#161616;">Analyze</span>
<span class="t" style="left:697.60px;top:434.00px;font-size:6.4px;color:#161616;transform:scaleX(0.973);transform-origin:left top;">High Res: 16 bits</span>
<span class="t" style="left:697.60px;top:442.00px;font-size:6.4px;color:#161616;">522 Acqs</span>
<div class="a" style="left:762.9px;top:416.3px;width:34.1px;height:14.6px;background:#22cc22;border-radius:2.5px;"></div>
<span class="t" style="left:767.24px;top:421.00px;font-size:5.6px;color:#eaffea;font-weight:700;">Triggered</span>
<div class="a" style="left:47px;top:179px;width:183.3px;height:228.5px;background:rgba(138,138,138,0.93);"></div>
<div class="a" style="left:47px;top:179px;width:183.3px;height:18px;background:#5a5a5d;"></div>
<span class="t" style="left:52.00px;top:185.00px;font-size:7px;color:#d8d8d8;transform:scaleX(0.900);transform-origin:left top;">BUS 1</span>
<div class="a" style="left:211.3px;top:183.1px;width:10.4px;height:10.4px;background:transparent;border:1px solid #e0e0e0;border-radius:50%;"></div>
<span class="t" style="left:214.50px;top:184.00px;font-size:7.2px;color:#e0e0e0;">?</span>
<span class="t" style="left:52.00px;top:202.00px;font-size:6.4px;color:#101010;transform:scaleX(0.982);transform-origin:left top;">Display</span>
<span class="t" style="left:84.00px;top:202.00px;font-size:6.4px;color:#101010;transform:scaleX(0.958);transform-origin:left top;">Label</span>
<span class="t" style="left:155.00px;top:202.00px;font-size:6.4px;color:#101010;transform:scaleX(1.015);transform-origin:left top;">Position</span>
<div class="a" style="left:51.8px;top:208.8px;width:31px;height:18px;background:#2ab0e8;border:1px solid #70cdf0;border-radius:3px;"></div>
<div class="a" style="left:72.5px;top:210.5px;width:8.5px;height:14.5px;background:#c4c4c4;border-radius:2px;background:linear-gradient(#d6d6d6,#b4b4b4);border-left:1px solid #8a8a8a;"></div>
<span class="t" style="left:58.83px;top:215.00px;font-size:6.4px;color:#0c3448;transform:scaleX(1.019);transform-origin:center top;">On</span>
<div class="a" style="left:85px;top:210.2px;width:67.19999999999999px;height:14.800000000000011px;background:#d1d1d1;border-radius:2px;"></div>
<span class="t" style="left:87.50px;top:215.00px;font-size:6.4px;color:#111;transform:scaleX(0.775);transform-origin:left top;">SPI</span>
<div class="a" style="left:156.9px;top:210.4px;width:46.19999999999999px;height:14.599999999999994px;background:#d1d1d1;border-radius:2px;"></div>
<span class="t" style="left:184.48px;top:215.00px;font-size:6.4px;color:#111;transform:scaleX(0.969);transform-origin:right top;">2 divs</span>
<div class="a" style="left:207px;top:210.4px;width:16.900000000000006px;height:14.5px;background:#d2d2d2;border-radius:2px;"></div>
<span class="t" style="left:210.85px;top:212.00px;font-size:6.2px;color:#111;">Set</span>
<span class="t" style="left:210.33px;top:218.00px;font-size:6.2px;color:#111;">to 0</span>
<span class="t" style="left:51.70px;top:231.00px;font-size:6.4px;color:#101010;">Bus Type</span>
<span class="t" style="left:175.30px;top:230.00px;font-size:6.4px;color:#101010;">Framing</span>
<div class="a" style="left:53.2px;top:239.4px;width:48.5px;height:14.5px;background:#d1d1d1;border-radius:1px;"></div>
<span class="t" style="left:55.50px;top:244.00px;font-size:6.4px;color:#111;transform:scaleX(0.775);transform-origin:left top;">SPI</span>
<svg class="a" style="left:93.5px;top:243.6px" width="6" height="6" viewBox="93.5 243.6 6 6"><polygon points="94.6,245.4 98.4,245.4 96.5,248.2" fill="#6e6e6e"/></svg>
<div class="a" style="left:176.7px;top:239px;width:23.5px;height:14.2px;background:#22b0ea;border-radius:2px 0 0 2px;"></div>
<div class="a" style="left:200.2px;top:239px;width:23.7px;height:14.2px;background:#d0d0d0;border-radius:0 2px 2px 0;"></div>
<span class="t" style="left:184.23px;top:243.00px;font-size:6.4px;color:#0c2a3a;">SS</span>
<span class="t" style="left:207.74px;top:243.00px;font-size:6.4px;color:#111;">Idle</span>
<span class="t" style="left:71.20px;top:264.00px;font-size:6.4px;color:#101010;">Source</span>
<span class="t" style="left:122.20px;top:264.00px;font-size:6.4px;color:#101010;">Threshold</span>
<span class="t" style="left:174.80px;top:264.00px;font-size:6.4px;color:#101010;transform:scaleX(1.031);transform-origin:left top;">Polarity</span>
<span class="t" style="left:52.00px;top:274.00px;font-size:6.4px;color:#101010;">SCLK</span>
<span class="t" style="left:52.00px;top:281.00px;font-size:6.4px;color:#101010;">Input</span>
<div class="a" style="left:73px;top:272.1px;width:48.7px;height:14.599999999999966px;background:#d1d1d1;border-radius:1px;"></div>
<span class="t" style="left:74.70px;top:276.00px;font-size:6.6px;color:#111;">Ch 1</span>
<svg class="a" style="left:113px;top:276.6px" width="6" height="6" viewBox="113 276.6 6 6"><polygon points="114.1,278.40000000000003 117.9,278.40000000000003 116,281.20000000000005" fill="#6e6e6e"/></svg>
<div class="a" style="left:124px;top:272.1px;width:50.099999999999994px;height:14.599999999999966px;background:#d1d1d1;border-radius:2px;"></div>
<span class="t" style="left:162.79px;top:277.00px;font-size:6.6px;color:#111;transform:scaleX(0.979);transform-origin:right top;">2 V</span>
<span class="t" style="left:52.00px;top:292.00px;font-size:6.4px;color:#101010;">SS</span>
<span class="t" style="left:52.00px;top:299.00px;font-size:6.4px;color:#101010;">Input</span>
<div class="a" style="left:73px;top:290px;width:48.7px;height:14.300000000000011px;background:#d1d1d1;border-radius:1px;"></div>
<span class="t" style="left:74.70px;top:294.00px;font-size:6.6px;color:#111;">Ch 3</span>
<svg class="a" style="left:113px;top:294.5px" width="6" height="6" viewBox="113 294.5 6 6"><polygon points="114.1,296.3 117.9,296.3 116,299.1" fill="#6e6e6e"/></svg>
<div class="a" style="left:124px;top:290px;width:50.099999999999994px;height:14.300000000000011px;background:#d1d1d1;border-radius:2px;"></div>
<span class="t" style="left:162.79px;top:294.00px;font-size:6.6px;color:#111;transform:scaleX(0.979);transform-origin:right top;">2 V</span>
<span class="t" style="left:52.00px;top:310.00px;font-size:6.4px;color:#101010;">SDA</span>
<span class="t" style="left:52.00px;top:317.00px;font-size:6.4px;color:#101010;">Input</span>
<div class="a" style="left:73px;top:307.8px;width:48.7px;height:14.399999999999977px;background:#d1d1d1;border-radius:1px;"></div>
<span class="t" style="left:74.70px;top:312.00px;font-size:6.6px;color:#111;">Ch 2</span>
<svg class="a" style="left:113px;top:312.3px" width="6" height="6" viewBox="113 312.3 6 6"><polygon points="114.1,314.1 117.9,314.1 116,316.90000000000003" fill="#6e6e6e"/></svg>
<div class="a" style="left:124px;top:307.8px;width:50.099999999999994px;height:14.399999999999977px;background:#d1d1d1;border-radius:2px;"></div>
<span class="t" style="left:162.79px;top:312.00px;font-size:6.6px;color:#111;transform:scaleX(0.979);transform-origin:right top;">2 V</span>
<div class="a" style="left:176.7px;top:272.2px;width:23.4px;height:14.5px;background:#22b0ea;border-radius:2px 0 0 2px;"></div>
<div class="a" style="left:200.1px;top:272.2px;width:23.8px;height:14.5px;background:#d0d0d0;border-radius:0 2px 2px 0;"></div>
<svg class="a" style="left:176px;top:272px" width="50" height="16" viewBox="176 272 50 16">
<path d="M181.3,283.4 h5.2 l4.9,-8.2 h3.3" fill="none" stroke="#232a78" stroke-width="0.9"/>
<path d="M205.9,275.2 h4.3 l6.2,8.2 h3.2" fill="none" stroke="#232a78" stroke-width="0.9"/>
</svg>
<div class="a" style="left:176.7px;top:290px;width:23.4px;height:14.3px;background:#d0d0d0;border-radius:2px 0 0 2px;"></div>
<div class="a" style="left:200.1px;top:290px;width:23.8px;height:14.3px;background:#22b0ea;border-radius:0 2px 2px 0;"></div>
<div class="a" style="left:176.7px;top:307.8px;width:23.4px;height:14.4px;background:#22b0ea;border-radius:2px 0 0 2px;"></div>
<div class="a" style="left:200.1px;top:307.8px;width:23.8px;height:14.4px;background:#d0d0d0;border-radius:0 2px 2px 0;"></div>
<span class="t" style="left:179.55px;top:291.00px;font-size:6.5px;color:#111;">Active</span>
<span class="t" style="left:181.72px;top:297.00px;font-size:6.5px;color:#111;">High</span>
<span class="t" style="left:203.15px;top:291.00px;font-size:6.5px;color:#0c2a3a;">Active</span>
<span class="t" style="left:206.04px;top:297.00px;font-size:6.5px;color:#0c2a3a;">Low</span>
<span class="t" style="left:179.55px;top:309.00px;font-size:6.5px;color:#0c2a3a;">Active</span>
<span class="t" style="left:181.72px;top:315.00px;font-size:6.5px;color:#0c2a3a;">High</span>
<span class="t" style="left:203.15px;top:309.00px;font-size:6.5px;color:#111;">Active</span>
<span class="t" style="left:206.04px;top:315.00px;font-size:6.5px;color:#111;">Low</span>
<span class="t" style="left:52.00px;top:328.00px;font-size:6.4px;color:#101010;transform:scaleX(0.983);transform-origin:left top;">Word Size</span>
<span class="t" style="left:151.10px;top:328.00px;font-size:6.4px;color:#101010;transform:scaleX(0.982);transform-origin:left top;">Display</span>
<div class="a" style="left:53.2px;top:336.9px;width:50.8px;height:14.0px;background:#d1d1d1;border-radius:2px;"></div>
<span class="t" style="left:82.94px;top:341.00px;font-size:6.4px;color:#111;">24 bits</span>
<div class="a" style="left:152.2px;top:336.9px;width:72.0px;height:14.0px;background:#d1d1d1;border-radius:1px;"></div>
<span class="t" style="left:154.40px;top:340.00px;font-size:6.4px;color:#111;">Bus and Waveforms</span>
<svg class="a" style="left:215.7px;top:341px" width="6" height="6" viewBox="215.7 341 6 6"><polygon points="216.79999999999998,342.8 220.6,342.8 218.7,345.6" fill="#6e6e6e"/></svg>
<span class="t" style="left:52.00px;top:357.00px;font-size:6.4px;color:#101010;transform:scaleX(1.015);transform-origin:left top;">Bit Order</span>
<span class="t" style="left:151.10px;top:357.00px;font-size:6.4px;color:#101010;">Decode Format</span>
<div class="a" style="left:53.2px;top:365.3px;width:31px;height:14.4px;background:#22b0ea;border-radius:2px 0 0 2px;"></div>
<div class="a" style="left:84.2px;top:365.3px;width:30.6px;height:14.4px;background:#d0d0d0;border-radius:0 2px 2px 0;"></div>
<span class="t" style="left:56.80px;top:369.00px;font-size:6.4px;color:#0c2a3a;transform:scaleX(0.953);transform-origin:left top;">MS First</span>
<span class="t" style="left:90.30px;top:369.00px;font-size:6.4px;color:#111;transform:scaleX(0.903);transform-origin:left top;">LS First</span>
<div class="a" style="left:152.2px;top:365.8px;width:72.0px;height:14.0px;background:#d1d1d1;border-radius:1px;"></div>
<span class="t" style="left:154.40px;top:370.00px;font-size:6.4px;color:#111;transform:scaleX(0.931);transform-origin:left top;">Hex</span>
<svg class="a" style="left:215.7px;top:369.8px" width="6" height="6" viewBox="215.7 369.8 6 6"><polygon points="216.79999999999998,371.6 220.6,371.6 218.7,374.40000000000003" fill="#6e6e6e"/></svg>
<svg class="a" style="left:125px;top:407px" width="26" height="7" viewBox="125 407 26 7"><polygon points="130,407.5 146,407.5 140.5,413 135.5,413" fill="rgba(138,138,138,0.93)"/></svg>
</body></html>
